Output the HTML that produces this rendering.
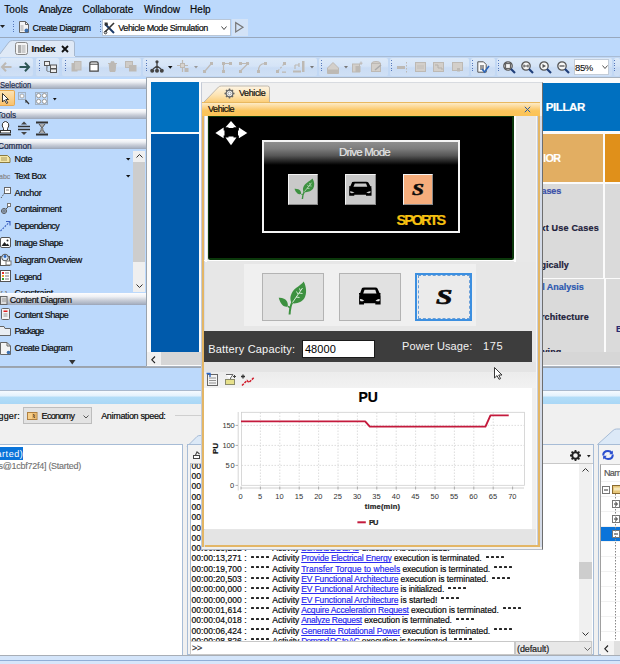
<!DOCTYPE html>
<html><head><meta charset="utf-8">
<style>
*{margin:0;padding:0;box-sizing:border-box}
html,body{width:620px;height:664px;overflow:hidden}
body{position:relative;background:#bcd9fc;font-family:"Liberation Sans",sans-serif;font-size:10px;color:#1a1a1a}
.a{position:absolute}
.t{position:absolute;white-space:pre;-webkit-text-stroke:0.2px currentColor}
svg{position:absolute;overflow:visible}
</style></head><body>

<div class="a" style="left:0px;top:0px;width:620px;height:18px;background:#bcd9fc;"></div>
<div class="t" style="left:4.20px;top:4.63px;font-size:10px;line-height:10px;color:#0a0a0a;letter-spacing:0.110px;">Tools</div>
<div class="t" style="left:38.70px;top:4.63px;font-size:10px;line-height:10px;color:#0a0a0a;letter-spacing:-0.346px;">Analyze</div>
<div class="t" style="left:82.50px;top:4.63px;font-size:10px;line-height:10px;color:#0a0a0a;letter-spacing:-0.036px;">Collaborate</div>
<div class="t" style="left:144.10px;top:4.63px;font-size:10px;line-height:10px;color:#0a0a0a;letter-spacing:0.084px;">Window</div>
<div class="t" style="left:190.10px;top:4.63px;font-size:10px;line-height:10px;color:#0a0a0a;">Help</div>
<div class="a" style="left:0px;top:18px;width:620px;height:19px;background:#bcd9fc;"></div>
<div class="a" style="left:0px;top:36.5px;width:620px;height:1px;background:#98a8bd;"></div>
<div class="a" style="left:0px;top:37.5px;width:620px;height:1px;background:#d5e6fb;"></div>
<svg style="left:0;top:25px" width="6" height="4"><path d="M0 0H5L2.5 3Z" fill="#222"/></svg>
<div class="a" style="left:12.5px;top:21.0px;width:1px;height:1px;background:#5577bb;"></div>
<div class="a" style="left:12.5px;top:23.5px;width:1px;height:1px;background:#5577bb;"></div>
<div class="a" style="left:12.5px;top:26.0px;width:1px;height:1px;background:#5577bb;"></div>
<div class="a" style="left:12.5px;top:28.5px;width:1px;height:1px;background:#5577bb;"></div>
<div class="a" style="left:12.5px;top:31.0px;width:1px;height:1px;background:#5577bb;"></div>
<svg style="left:18px;top:21px" width="12" height="13"><path d="M1.5 0.5H7.5L10.5 3.5V11.5H1.5Z" fill="#f4f4f4" stroke="#666"/><path d="M7.5 0.5V3.5H10.5" fill="none" stroke="#666"/><rect x="2.5" y="4" width="3" height="6" fill="#ccc"/><circle cx="8.5" cy="9.5" r="2" fill="#3b6fb0"/></svg>
<div class="t" style="left:32.60px;top:23.58px;font-size:9px;line-height:9px;color:#0a0a0a;letter-spacing:-0.401px;">Create Diagram</div>
<div class="a" style="left:99.5px;top:21.0px;width:1px;height:1px;background:#5577bb;"></div>
<div class="a" style="left:99.5px;top:23.5px;width:1px;height:1px;background:#5577bb;"></div>
<div class="a" style="left:99.5px;top:26.0px;width:1px;height:1px;background:#5577bb;"></div>
<div class="a" style="left:99.5px;top:28.5px;width:1px;height:1px;background:#5577bb;"></div>
<div class="a" style="left:99.5px;top:31.0px;width:1px;height:1px;background:#5577bb;"></div>
<div class="a" style="left:101.5px;top:19px;width:129px;height:17px;background:#ffffff;border:1px solid #b9c6d6;"></div>
<svg style="left:104px;top:21.5px" width="12" height="12"><path d="M1 2L10 11" stroke="#1a3a6a" stroke-width="2"/><path d="M10 1L1 10" stroke="#333" stroke-width="1.6"/><path d="M0.5 0.5L3.5 0.5L4 3L1 4Z" fill="#333"/><circle cx="1.5" cy="10.5" r="1.3" fill="none" stroke="#333"/></svg>
<div class="t" style="left:118.20px;top:23.98px;font-size:9px;line-height:9px;color:#0a0a0a;letter-spacing:-0.384px;">Vehicle Mode Simulation</div>
<svg style="left:221px;top:25.5px" width="7" height="5"><path d="M0.5 0.5L3 3.5L5.5 0.5" fill="none" stroke="#444" stroke-width="1"/></svg>
<div class="a" style="left:232px;top:19px;width:16px;height:17px;background:#d3e3f7;"></div>
<svg style="left:235px;top:22px" width="9" height="11"><path d="M0.7 0.7V10L8 5.35Z" fill="none" stroke="#777" stroke-width="1.2"/></svg>
<div class="a" style="left:0px;top:37.5px;width:620px;height:19.5px;background:#bcd9fc;"></div>
<div class="a" style="left:0px;top:56px;width:620px;height:1px;background:#a9bcd4;"></div>
<svg style="left:0;top:40px" width="80" height="18"><path d="M-2 16.5 L9 2 Q10.5 0.5 12.5 0.5 H72 Q74.5 0.5 74.5 3 V17 H-2Z" fill="#dfe9f6" stroke="#a6b8cf" stroke-width="1"/></svg>
<div class="a" style="left:0px;top:56px;width:75px;height:1.5px;background:#dfe9f6;"></div>
<svg style="left:15px;top:42px" width="14" height="13"><rect x="0.5" y="0.5" width="12" height="12" rx="2" fill="#f4f4f4" stroke="#888"/><rect x="3" y="3" width="3" height="8" fill="#aaa"/><rect x="6.5" y="3" width="4" height="8" fill="#ccc"/></svg>
<div class="t" style="left:31.60px;top:43.56px;font-size:9.5px;line-height:9.5px;font-weight:700;color:#111;letter-spacing:-0.213px;">Index</div>
<svg style="left:60.5px;top:44.5px" width="8" height="8"><path d="M1 1L7 7M7 1L1 7" stroke="#111" stroke-width="1.9"/></svg>
<div class="a" style="left:0px;top:57px;width:620px;height:20px;background:#c2d8f4;"></div>
<div class="a" style="left:0px;top:58px;width:33px;height:18px;background:linear-gradient(#dce9f8,#d5e4f7 45%,#cadcf4 55%,#d0e0f5);border-radius:2px;"></div>
<div class="a" style="left:35.5px;top:58px;width:23.5px;height:18px;background:linear-gradient(#dce9f8,#d5e4f7 45%,#cadcf4 55%,#d0e0f5);border-radius:2px;"></div>
<div class="a" style="left:62px;top:58px;width:79px;height:18px;background:linear-gradient(#dce9f8,#d5e4f7 45%,#cadcf4 55%,#d0e0f5);border-radius:2px;"></div>
<div class="a" style="left:143px;top:58px;width:173.5px;height:18px;background:linear-gradient(#dce9f8,#d5e4f7 45%,#cadcf4 55%,#d0e0f5);border-radius:2px;"></div>
<div class="a" style="left:318.5px;top:58px;width:69.5px;height:18px;background:linear-gradient(#dce9f8,#d5e4f7 45%,#cadcf4 55%,#d0e0f5);border-radius:2px;"></div>
<div class="a" style="left:390px;top:58px;width:79px;height:18px;background:linear-gradient(#dce9f8,#d5e4f7 45%,#cadcf4 55%,#d0e0f5);border-radius:2px;"></div>
<div class="a" style="left:471px;top:58px;width:24px;height:18px;background:linear-gradient(#dce9f8,#d5e4f7 45%,#cadcf4 55%,#d0e0f5);border-radius:2px;"></div>
<div class="a" style="left:497px;top:58px;width:115px;height:18px;background:linear-gradient(#dce9f8,#d5e4f7 45%,#cadcf4 55%,#d0e0f5);border-radius:2px;"></div>
<div class="a" style="left:613.5px;top:58px;width:6.5px;height:18px;background:linear-gradient(#dce9f8,#d5e4f7 45%,#cadcf4 55%,#d0e0f5);border-radius:2px;"></div>
<div class="a" style="left:0px;top:76.5px;width:620px;height:1px;background:#a8bad0;"></div>
<svg style="left:1px;top:62px" width="11" height="10" viewBox="0 0 11 10"><path d="M5 0.8L1 5L5 9.2M1.2 5H10.5" fill="none" stroke="#bdb9b4" stroke-width="2"/></svg>
<svg style="left:18.5px;top:62px" width="11" height="10" viewBox="0 0 11 10"><path d="M6 0.8L10 5L6 9.2M0.5 5H9.8" fill="none" stroke="#2d5656" stroke-width="2"/></svg>
<div class="a" style="left:38.7px;top:60.0px;width:1px;height:1px;background:#5577bb;"></div>
<div class="a" style="left:38.7px;top:62.5px;width:1px;height:1px;background:#5577bb;"></div>
<div class="a" style="left:38.7px;top:65.0px;width:1px;height:1px;background:#5577bb;"></div>
<div class="a" style="left:38.7px;top:67.5px;width:1px;height:1px;background:#5577bb;"></div>
<div class="a" style="left:38.7px;top:70.0px;width:1px;height:1px;background:#5577bb;"></div>
<svg style="left:44px;top:60.5px" width="13" height="12" viewBox="0 0 13 12"><rect x="0.5" y="0.5" width="5" height="4" fill="#eee" stroke="#555"/><rect x="6.5" y="4" width="6" height="3.5" fill="#eee" stroke="#555"/><rect x="6.5" y="8" width="6" height="3.5" fill="#eee" stroke="#555"/><path d="M3 4.5V10H6.5M3 6H6.5" fill="none" stroke="#555"/><rect x="3.5" y="5" width="2.5" height="5" fill="#c9dff5"/></svg>
<div class="a" style="left:65.2px;top:60.0px;width:1px;height:1px;background:#5577bb;"></div>
<div class="a" style="left:65.2px;top:62.5px;width:1px;height:1px;background:#5577bb;"></div>
<div class="a" style="left:65.2px;top:65.0px;width:1px;height:1px;background:#5577bb;"></div>
<div class="a" style="left:65.2px;top:67.5px;width:1px;height:1px;background:#5577bb;"></div>
<div class="a" style="left:65.2px;top:70.0px;width:1px;height:1px;background:#5577bb;"></div>
<svg style="left:71px;top:61px" width="11" height="11" viewBox="0 0 11 11"><rect x="0.5" y="2" width="6" height="8.5" fill="#bdb9b4"/><rect x="3.5" y="0.5" width="6.5" height="8.5" fill="#cbc8c4" stroke="#bdb9b4"/></svg>
<svg style="left:89px;top:61px" width="10" height="11" viewBox="0 0 10 11"><path d="M0.8 2.5Q0.8 0.8 2.5 0.8H7.5Q9.2 0.8 9.2 2.5V10.2H0.8Z" fill="#fff" stroke="#444" stroke-width="1.2"/><path d="M1 3.2H9" stroke="#444"/></svg>
<svg style="left:108px;top:61px" width="9" height="11" viewBox="0 0 9 11"><path d="M0 2.5H9M3 2.5V0.8H6V2.5M1.2 3.5H7.8L7 10.5H2Z" fill="#bdb9b4" stroke="#bdb9b4"/></svg>
<svg style="left:124.5px;top:61px" width="12" height="11" viewBox="0 0 12 11"><rect x="0.5" y="0.5" width="7" height="6" fill="#cfccc8" stroke="#bdb9b4"/><rect x="4" y="4" width="7.5" height="6.5" fill="#bdb9b4"/></svg>
<div class="a" style="left:145.5px;top:60.0px;width:1px;height:1px;background:#5577bb;"></div>
<div class="a" style="left:145.5px;top:62.5px;width:1px;height:1px;background:#5577bb;"></div>
<div class="a" style="left:145.5px;top:65.0px;width:1px;height:1px;background:#5577bb;"></div>
<div class="a" style="left:145.5px;top:67.5px;width:1px;height:1px;background:#5577bb;"></div>
<div class="a" style="left:145.5px;top:70.0px;width:1px;height:1px;background:#5577bb;"></div>
<svg style="left:150px;top:59.5px" width="14" height="13" viewBox="0 0 14 13"><circle cx="7" cy="1.8" r="1.6" fill="#444"/><path d="M7 3V6M7 6L3 9M7 6L11 9M7 6V9" stroke="#444" stroke-width="1.3" fill="none"/><circle cx="2.2" cy="10.8" r="2" fill="#444"/><circle cx="7" cy="10.8" r="2" fill="#444"/><circle cx="11.8" cy="10.8" r="2" fill="#444"/></svg>
<svg style="left:168px;top:65.5px" width="5" height="3" viewBox="0 0 5 3"><path d="M0 0H4.5L2.25 2.8Z" fill="#111"/></svg>
<svg style="left:176.5px;top:60px" width="12" height="13" viewBox="0 0 12 13"><path d="M5.5 0V12M0 5.5H11" stroke="#bdb9b4" stroke-width="1.2"/><rect x="3.5" y="3.5" width="4" height="4" fill="#d8d4cf" stroke="#bdb9b4"/><rect x="7.5" y="8" width="4" height="4" fill="#bdb9b4"/></svg>
<svg style="left:193.5px;top:66px" width="4" height="3" viewBox="0 0 4 3"><path d="M0 0H4L2 2.5Z" fill="#999"/></svg>
<svg style="left:203px;top:61.5px" width="11" height="11" viewBox="0 0 11 11"><path d="M2 9L8 2" stroke="#bdb9b4" stroke-width="1.2"/><rect x="0" y="8" width="3" height="3" fill="#bdb9b4"/><rect x="7" y="0" width="3" height="3" fill="#bdb9b4"/></svg>
<svg style="left:221.5px;top:61.5px" width="11" height="11" viewBox="0 0 11 11"><path d="M1.5 1.5H9M1.5 1.5V9" stroke="#bdb9b4" stroke-width="1.2"/><rect x="0" y="0" width="3" height="3" fill="#bdb9b4"/><rect x="7" y="0" width="3" height="3" fill="#bdb9b4"/><rect x="0" y="8" width="3" height="3" fill="#bdb9b4"/></svg>
<svg style="left:239px;top:61.5px" width="11" height="11" viewBox="0 0 11 11"><path d="M1.5 1.5H9L1.5 9" stroke="#bdb9b4" stroke-width="1.2" fill="none"/><rect x="0" y="0" width="3" height="3" fill="#bdb9b4"/><rect x="7" y="0" width="3" height="3" fill="#bdb9b4"/><rect x="0" y="8" width="3" height="3" fill="#bdb9b4"/></svg>
<svg style="left:257px;top:61.5px" width="11" height="11" viewBox="0 0 11 11"><path d="M1.5 9Q1.5 1.5 8 1.5" stroke="#bdb9b4" stroke-width="1.2" fill="none"/><rect x="0" y="8" width="3" height="3" fill="#bdb9b4"/><rect x="7" y="0" width="3" height="3" fill="#bdb9b4"/></svg>
<svg style="left:275.5px;top:61.5px" width="11" height="11" viewBox="0 0 11 11"><path d="M2 9L8 2" stroke="#bdb9b4" stroke-width="1.2" stroke-dasharray="2 1.5"/><rect x="0" y="8" width="3" height="3" fill="#bdb9b4"/><rect x="7" y="0" width="3" height="3" fill="#bdb9b4"/><rect x="6" y="9.5" width="4" height="1.3" fill="#bdb9b4"/></svg>
<svg style="left:293px;top:61px" width="12" height="12" viewBox="0 0 12 12"><path d="M2 4H6M2 4V8M6 2V6" stroke="#bdb9b4" stroke-width="1.2" fill="none"/><rect x="9" y="0" width="2.5" height="11" fill="#bdb9b4"/><rect x="0" y="9.5" width="8" height="2" fill="#bdb9b4"/></svg>
<svg style="left:309.5px;top:66px" width="4" height="3" viewBox="0 0 4 3"><path d="M0 0H4L2 2.5Z" fill="#777"/></svg>
<div class="a" style="left:321.3px;top:60.0px;width:1px;height:1px;background:#5577bb;"></div>
<div class="a" style="left:321.3px;top:62.5px;width:1px;height:1px;background:#5577bb;"></div>
<div class="a" style="left:321.3px;top:65.0px;width:1px;height:1px;background:#5577bb;"></div>
<div class="a" style="left:321.3px;top:67.5px;width:1px;height:1px;background:#5577bb;"></div>
<div class="a" style="left:321.3px;top:70.0px;width:1px;height:1px;background:#5577bb;"></div>
<svg style="left:327px;top:61.5px" width="12" height="12" viewBox="0 0 12 12"><path d="M0.5 6L6 0.5L11.5 6V11.5H0.5Z" fill="#d3cfca" stroke="#bdb9b4"/><rect x="1" y="7.5" width="10" height="4" fill="#bdb9b4"/></svg>
<svg style="left:344px;top:66px" width="4" height="3" viewBox="0 0 4 3"><path d="M0 0H4L2 2.5Z" fill="#777"/></svg>
<svg style="left:351.5px;top:61px" width="12" height="12" viewBox="0 0 12 12"><rect x="0.5" y="3" width="7" height="8" fill="#d3cfca" stroke="#bdb9b4"/><rect x="3.5" y="5" width="5" height="6" fill="#bdb9b4"/><path d="M9 0.5V4M7.5 2.2H10.5" stroke="#bdb9b4"/></svg>
<svg style="left:371px;top:61px" width="11" height="12" viewBox="0 0 11 12"><ellipse cx="5" cy="2.5" rx="4.5" ry="2" fill="#d3cfca" stroke="#bdb9b4"/><rect x="0.5" y="2.5" width="9" height="8" fill="#d3cfca" stroke="#bdb9b4"/><path d="M4 9L10 4" stroke="#aaa" stroke-width="1.5"/></svg>
<div class="a" style="left:391.3px;top:60.0px;width:1px;height:1px;background:#5577bb;"></div>
<div class="a" style="left:391.3px;top:62.5px;width:1px;height:1px;background:#5577bb;"></div>
<div class="a" style="left:391.3px;top:65.0px;width:1px;height:1px;background:#5577bb;"></div>
<div class="a" style="left:391.3px;top:67.5px;width:1px;height:1px;background:#5577bb;"></div>
<div class="a" style="left:391.3px;top:70.0px;width:1px;height:1px;background:#5577bb;"></div>
<svg style="left:397px;top:61.5px" width="11" height="11" viewBox="0 0 11 11"><rect x="0" y="4" width="8" height="3" fill="#bdb9b4"/><path d="M9.5 0V11" stroke="#bdb9b4" stroke-dasharray="1.5 1.5"/></svg>
<svg style="left:415px;top:61.5px" width="11" height="10" viewBox="0 0 11 10"><rect x="0.5" y="0.5" width="10" height="9" fill="#d3cfca" stroke="#bdb9b4"/><path d="M2 4H9M2 6H9" stroke="#c2beb9"/></svg>
<svg style="left:433px;top:61.5px" width="11" height="10" viewBox="0 0 11 10"><rect x="0.5" y="0.5" width="10" height="9" fill="#d3cfca" stroke="#bdb9b4"/><path d="M2 3H5V6H9V8" stroke="#b5b1ac" fill="none"/></svg>
<svg style="left:451.5px;top:61.5px" width="11" height="10" viewBox="0 0 11 10"><rect x="0.5" y="0.5" width="10" height="8" fill="#d3cfca" stroke="#bdb9b4"/><rect x="5" y="6" width="3" height="3.5" fill="#bdb9b4"/></svg>
<div class="a" style="left:472.3px;top:60.0px;width:1px;height:1px;background:#5577bb;"></div>
<div class="a" style="left:472.3px;top:62.5px;width:1px;height:1px;background:#5577bb;"></div>
<div class="a" style="left:472.3px;top:65.0px;width:1px;height:1px;background:#5577bb;"></div>
<div class="a" style="left:472.3px;top:67.5px;width:1px;height:1px;background:#5577bb;"></div>
<div class="a" style="left:472.3px;top:70.0px;width:1px;height:1px;background:#5577bb;"></div>
<svg style="left:476.5px;top:60.5px" width="13" height="13" viewBox="0 0 13 13"><path d="M0.8 0.8H6.5L9.2 3.5V11.2H0.8Z" fill="#fafafa" stroke="#555"/><path d="M3 4H7L7 9H3Z" fill="#999"/><path d="M5 8L7.5 11L12 5" fill="none" stroke="#2b64b8" stroke-width="1.6"/></svg>
<div class="a" style="left:498px;top:60.0px;width:1px;height:1px;background:#5577bb;"></div>
<div class="a" style="left:498px;top:62.5px;width:1px;height:1px;background:#5577bb;"></div>
<div class="a" style="left:498px;top:65.0px;width:1px;height:1px;background:#5577bb;"></div>
<div class="a" style="left:498px;top:67.5px;width:1px;height:1px;background:#5577bb;"></div>
<div class="a" style="left:498px;top:70.0px;width:1px;height:1px;background:#5577bb;"></div>
<svg style="left:503px;top:60.5px" width="13" height="13" viewBox="0 0 13 13"><circle cx="5" cy="5" r="4.2" fill="#f6f6f6" stroke="#555" stroke-width="1.3"/><rect x="2.6" y="2.6" width="4.8" height="4.8" fill="none" stroke="#555"/><path d="M8 8L12 12" stroke="#1f3e7a" stroke-width="2.2"/></svg>
<svg style="left:521px;top:60.5px" width="13" height="13" viewBox="0 0 13 13"><circle cx="5" cy="5" r="4.2" fill="#f6f6f6" stroke="#555" stroke-width="1.3"/><path d="M2.5 5H7.5M3 3.5V6.5M7 3.5V6.5" stroke="#555"/><path d="M8 8L12 12" stroke="#1f3e7a" stroke-width="2.2"/></svg>
<svg style="left:539px;top:60.5px" width="13" height="13" viewBox="0 0 13 13"><circle cx="5" cy="5" r="4.2" fill="#f6f6f6" stroke="#555" stroke-width="1.3"/><path d="M3.5 3L7 5L3.5 7Z" fill="#555"/><path d="M8 8L12 12" stroke="#1f3e7a" stroke-width="2.2"/></svg>
<svg style="left:557px;top:60.5px" width="13" height="13" viewBox="0 0 13 13"><circle cx="5" cy="5" r="4.2" fill="#f6f6f6" stroke="#555" stroke-width="1.3"/><path d="M2.5 5H7.5" stroke="#555" stroke-width="1.3"/><path d="M8 8L12 12" stroke="#1f3e7a" stroke-width="2.2"/></svg>
<div class="a" style="left:573.5px;top:58.5px;width:35px;height:16px;background:#ffffff;border:1px solid #c2ccd8;"></div>
<div class="t" style="left:575.00px;top:63.06px;font-size:9.5px;line-height:9.5px;color:#111;letter-spacing:-0.378px;-webkit-text-stroke:0.1px;">85%</div>
<svg style="left:601.5px;top:64.5px" width="7" height="5" viewBox="0 0 7 5"><path d="M0.5 0.5L3 3.5L5.5 0.5" fill="none" stroke="#555"/></svg>
<div class="a" style="left:614px;top:60.0px;width:1px;height:1px;background:#5577bb;"></div>
<div class="a" style="left:614px;top:62.5px;width:1px;height:1px;background:#5577bb;"></div>
<div class="a" style="left:614px;top:65.0px;width:1px;height:1px;background:#5577bb;"></div>
<div class="a" style="left:614px;top:67.5px;width:1px;height:1px;background:#5577bb;"></div>
<div class="a" style="left:614px;top:70.0px;width:1px;height:1px;background:#5577bb;"></div>
<div class="a" style="left:0px;top:77px;width:146px;height:291px;background:#bcd9fc;"></div>
<div class="a" style="left:145.5px;top:77px;width:1px;height:290px;background:#9aa3ad;"></div>
<div class="a" style="left:0px;top:78.5px;width:145.5px;height:10.299999999999997px;background:linear-gradient(#fdfdfe 0%,#eef0f4 30%,#c9ced8 60%,#a9b2c2 90%,#9aa4b6 100%);"></div>
<div class="t" style="left:-0.50px;top:80.06px;font-size:9.5px;line-height:9.5px;color:#1a2a50;transform:scaleX(0.7956);transform-origin:0 0;">Selection</div>
<div class="a" style="left:0px;top:90px;width:14.5px;height:16px;background:linear-gradient(#fde3b3,#f9c26e);border:1px solid #e8a94f;border-left:none;border-radius:0 2px 2px 0;"></div>
<svg style="left:2px;top:92.5px" width="7" height="11" viewBox="0 0 7 11"><path d="M0.5 0.5V9L2.5 7L4.5 10.5L5.8 9.8L3.8 6.5H6.5Z" fill="#fff" stroke="#222" stroke-width="0.9"/></svg>
<svg style="left:17.5px;top:92px" width="12" height="13" viewBox="0 0 12 13"><rect x="0.5" y="0.5" width="7" height="7" fill="none" stroke="#888" stroke-dasharray="1 1"/><circle cx="4" cy="4" r="2" fill="#fff" stroke="#aaa"/><path d="M7.5 8L11 12" stroke="#333" stroke-width="1.2"/><path d="M7.5 8V11L9 10Z" fill="#333"/></svg>
<svg style="left:35px;top:92px" width="13" height="13" viewBox="0 0 13 13"><rect x="0.5" y="0.5" width="12" height="12" fill="none" stroke="#888" stroke-dasharray="1 1"/><circle cx="3.6" cy="3.6" r="2.1" fill="#fff" stroke="#999"/><circle cx="9.4" cy="3.6" r="2.1" fill="#fff" stroke="#999"/><circle cx="3.6" cy="9.4" r="2.1" fill="#fff" stroke="#999"/><circle cx="9.4" cy="9.4" r="2.1" fill="#fff" stroke="#999"/></svg>
<svg style="left:52.8px;top:97.5px" width="4" height="3" viewBox="0 0 4 3"><path d="M0 0H3.6L1.8 2.4Z" fill="#111"/></svg>
<div class="a" style="left:0px;top:108.9px;width:145.5px;height:10.299999999999997px;background:linear-gradient(#fdfdfe 0%,#eef0f4 30%,#c9ced8 60%,#a9b2c2 90%,#9aa4b6 100%);"></div>
<div class="t" style="left:-3.20px;top:110.46px;font-size:9.5px;line-height:9.5px;color:#1a2a50;transform:scaleX(0.8634);transform-origin:0 0;">Tools</div>
<svg style="left:0px;top:121px" width="11" height="15" viewBox="0 0 11 15"><path d="M3.5 7.5Q1.5 5 2.5 2.5Q4 0.5 5.5 0.5Q7 0.5 8.5 2.5Q9.5 5 7.5 7.5V9.5H3.5Z" fill="#fff" stroke="#333"/><rect x="0.5" y="9.5" width="10" height="2.5" fill="#fff" stroke="#333"/><rect x="0" y="13" width="11" height="1.5" fill="#333"/></svg>
<svg style="left:17.5px;top:121px" width="12" height="15" viewBox="0 0 12 15"><path d="M6 0.5L9 3.5H3Z" fill="#444"/><path d="M0 5.5H12M0 8.5H12" stroke="#333" stroke-width="1.3"/><path d="M6 14L9 11H3Z" fill="#444"/></svg>
<svg style="left:35.5px;top:121px" width="12" height="15" viewBox="0 0 12 15"><rect x="0" y="0.5" width="12" height="2" fill="#333"/><path d="M3 3L6 7L9 3M3 12L6 8L9 12" fill="#aaa" stroke="#555"/><circle cx="6" cy="8" r="1.6" fill="#888"/><rect x="0" y="12.5" width="12" height="2" fill="#333"/></svg>
<div class="a" style="left:0px;top:139.2px;width:145.5px;height:10.300000000000011px;background:linear-gradient(#fdfdfe 0%,#eef0f4 30%,#c9ced8 60%,#a9b2c2 90%,#9aa4b6 100%);"></div>
<div class="t" style="left:-1.60px;top:140.76px;font-size:9.5px;line-height:9.5px;color:#1a2a50;transform:scaleX(0.8733);transform-origin:0 0;">Common</div>
<div class="a" style="left:0;top:150px;width:133px;height:143px;overflow:hidden">
<div class="t" style="left:14.50px;top:5.18px;font-size:9px;line-height:9px;color:#0a0a0a;letter-spacing:-0.365px;">Note</div>
<svg style="left:-1px;top:5px" width="12" height="8" viewBox="0 0 12 8"><path d="M0.5 0.5H8.5L11 3V7.5H0.5Z" fill="#f5e7a8" stroke="#8a7a40"/><path d="M2 3H8M2 5H8" stroke="#8a7a40" stroke-width="0.7"/></svg>
<div class="t" style="left:14.50px;top:22.18px;font-size:9px;line-height:9px;color:#0a0a0a;letter-spacing:-0.399px;">Text Box</div>
<div class="t" style="left:-1.00px;top:23.37px;font-size:7px;line-height:7px;color:#888;">abc</div>
<div class="t" style="left:14.50px;top:38.78px;font-size:9px;line-height:9px;color:#0a0a0a;letter-spacing:-0.262px;">Anchor</div>
<svg style="left:0px;top:36.599999999999994px" width="11" height="12" viewBox="0 0 11 12"><rect x="4.5" y="0.5" width="6" height="6" fill="#fff" stroke="#666"/><path d="M1 11L4.5 6" stroke="#555" stroke-dasharray="1.2 1"/><path d="M6 3H9" stroke="#666" stroke-width="0.8"/></svg>
<div class="t" style="left:14.50px;top:55.48px;font-size:9px;line-height:9px;color:#0a0a0a;letter-spacing:-0.381px;">Containment</div>
<svg style="left:0px;top:53.30000000000001px" width="11" height="12" viewBox="0 0 11 12"><circle cx="4" cy="8" r="2.5" fill="none" stroke="#555"/><path d="M1.5 8H6.5M4 5.5V10.5" stroke="#555" stroke-width="0.8"/><path d="M6 6L8.5 3.5" stroke="#555"/><rect x="7.5" y="0.5" width="3" height="3" fill="#fff" stroke="#777"/></svg>
<div class="t" style="left:14.50px;top:72.18px;font-size:9px;line-height:9px;color:#0a0a0a;letter-spacing:-0.592px;">Dependency</div>
<svg style="left:0px;top:70px" width="11" height="12" viewBox="0 0 11 12"><path d="M0.5 11L9.5 2" stroke="#3a5fbf" stroke-width="1.1" stroke-dasharray="1.8 1.2"/><path d="M6 1.5H10V5.5" fill="none" stroke="#3a5fbf" stroke-width="1.1"/></svg>
<div class="t" style="left:14.50px;top:89.18px;font-size:9px;line-height:9px;color:#0a0a0a;letter-spacing:-0.483px;">Image Shape</div>
<svg style="left:0px;top:87px" width="11" height="11" viewBox="0 0 11 11"><rect x="0.5" y="0.5" width="10" height="10" rx="1.5" fill="#fff" stroke="#555"/><path d="M1.5 9L4.5 5L6.5 7.5L7.5 6.5L9.5 9Z" fill="#222"/><circle cx="7.5" cy="3.5" r="1" fill="#222"/></svg>
<div class="t" style="left:14.50px;top:105.88px;font-size:9px;line-height:9px;color:#0a0a0a;letter-spacing:-0.421px;">Diagram Overview</div>
<svg style="left:0px;top:102.69999999999999px" width="12" height="13" viewBox="0 0 12 13"><rect x="0.5" y="3.5" width="9" height="9" fill="#fff" stroke="#555"/><circle cx="5" cy="4.5" r="3.3" fill="#d8e8f8" stroke="#555"/><circle cx="5" cy="3.5" r="1.4" fill="#2a66c0"/><rect x="6" y="8" width="5" height="4" fill="#fff" stroke="#777"/></svg>
<div class="t" style="left:14.50px;top:122.58px;font-size:9px;line-height:9px;color:#0a0a0a;letter-spacing:-0.565px;">Legend</div>
<svg style="left:0px;top:120.39999999999998px" width="11" height="12" viewBox="0 0 11 12"><rect x="0.5" y="0.5" width="10" height="11" fill="#fff" stroke="#555"/><rect x="2" y="2" width="2" height="2" fill="#e03030"/><rect x="2" y="5" width="2" height="2" fill="#f0a020"/><rect x="2" y="8" width="2" height="2" fill="#30a030"/><path d="M5 3H9M5 6H9M5 9H9" stroke="#777"/></svg>
<div class="t" style="left:14.50px;top:139.18px;font-size:9px;line-height:9px;color:#0a0a0a;letter-spacing:-0.257px;">Constraint</div>
<div class="t" style="left:0.00px;top:139.73px;font-size:8px;line-height:8px;color:#777;">{ }</div>
</div>
<div class="a" style="left:133.4px;top:150.8px;width:11.3px;height:141.2px;background:#efefef;"></div>
<div class="a" style="left:133.4px;top:162.2px;width:11.3px;height:99.5px;background:#cdcdcd;"></div>
<svg style="left:135.5px;top:154px" width="7" height="4" viewBox="0 0 7 4"><path d="M0.5 3.5L3.5 0.5L6.5 3.5" fill="none" stroke="#333"/></svg>
<svg style="left:135.5px;top:284px" width="7" height="4" viewBox="0 0 7 4"><path d="M0.5 0.5L3.5 3.5L6.5 0.5" fill="none" stroke="#333"/></svg>
<svg style="left:126px;top:157.8px" width="5" height="3" viewBox="0 0 5 3"><path d="M0 0H4.4L2.2 2.6Z" fill="#111"/></svg>
<svg style="left:126px;top:174.8px" width="5" height="3" viewBox="0 0 5 3"><path d="M0 0H4.4L2.2 2.6Z" fill="#111"/></svg>
<div class="a" style="left:0px;top:293.3px;width:145.5px;height:12px;background:linear-gradient(#fdfdfe 0%,#eef0f4 30%,#c9ced8 60%,#a9b2c2 90%,#9aa4b6 100%);"></div>
<svg style="left:-0.5px;top:296px" width="8" height="9" viewBox="0 0 8 9"><rect x="0.5" y="0.5" width="6.5" height="8" fill="#ddd" stroke="#666"/><path d="M2 3H6M2 5H6" stroke="#888" stroke-width="0.8"/></svg>
<div class="t" style="left:9.70px;top:296.18px;font-size:9px;line-height:9px;color:#111;letter-spacing:-0.402px;">Content Diagram</div>
<div class="t" style="left:14.50px;top:310.58px;font-size:9px;line-height:9px;color:#0a0a0a;letter-spacing:-0.486px;">Content Shape</div>
<svg style="left:1px;top:308.4px" width="9" height="12" viewBox="0 0 9 12"><rect x="0.5" y="0.5" width="8" height="11" rx="1" fill="#f5f5f5" stroke="#666"/><rect x="2.5" y="2.5" width="4" height="1.5" fill="#e02020"/><path d="M2.5 6H6.5M2.5 8H6.5" stroke="#999"/></svg>
<div class="t" style="left:14.50px;top:327.48px;font-size:9px;line-height:9px;color:#0a0a0a;letter-spacing:-0.885px;">Package</div>
<svg style="left:-1px;top:326.3px" width="12" height="10" viewBox="0 0 12 10"><path d="M0.5 2.5V0.5H5L6 2.5H11.5V9.5H0.5Z" fill="#eaeef3" stroke="#666"/></svg>
<div class="t" style="left:14.50px;top:344.18px;font-size:9px;line-height:9px;color:#0a0a0a;letter-spacing:-0.409px;">Create Diagram</div>
<svg style="left:-0.5px;top:342px" width="12" height="13" viewBox="0 0 12 13"><path d="M0.5 0.5H7L10.5 4V12.5H0.5Z" fill="#f4f4f4" stroke="#666"/><path d="M7 0.5V4H10.5" fill="none" stroke="#666"/><circle cx="8.5" cy="10.5" r="1.8" fill="#3b6fb0"/></svg>
<svg style="left:68.5px;top:359.8px" width="7" height="5" viewBox="0 0 7 5"><path d="M0 0H6.5L3.25 4.4Z" fill="#333"/></svg>
<div class="a" style="left:0px;top:366px;width:146px;height:1px;background:#9aa3ad;"></div>
<div class="a" style="left:146.5px;top:77px;width:473.5px;height:289px;background:#fbfbfb;"></div>
<div class="a" style="left:146px;top:76.6px;width:474px;height:0.8px;background:#a9b3bf;"></div>
<div class="a" style="left:150.5px;top:81.6px;width:48.8px;height:50.7px;background:#0070c0;"></div>
<div class="a" style="left:150.5px;top:134px;width:48.8px;height:218.3px;background:#005aab;"></div>
<div class="a" style="left:543px;top:83px;width:77px;height:47.8px;background:#0070c0;"></div>
<div class="t" style="left:545.70px;top:102.27px;font-size:11.5px;line-height:11.5px;font-weight:700;color:#ffffff;letter-spacing:-0.382px;">PILLAR</div>
<div class="a" style="left:543px;top:133.8px;width:60px;height:48px;background:#e2ae62;"></div>
<div class="a" style="left:604.5px;top:133.8px;width:15.5px;height:48px;background:#e0901a;"></div>
<div class="t" style="left:543.00px;top:153.39px;font-size:11px;line-height:11px;font-weight:700;color:#ffffff;letter-spacing:-0.641px;clip-path:inset(0 0 0 0.5px);">IOR</div>
<div class="a" style="left:543px;top:183.7px;width:60.3px;height:94px;background:#dadada;"></div>
<div class="a" style="left:604.5px;top:183.7px;width:15.5px;height:94px;background:#dadada;"></div>
<div class="a" style="left:543px;top:279px;width:60.8px;height:73.3px;background:#dadada;"></div>
<div class="a" style="left:605.5px;top:279px;width:14.5px;height:73.3px;background:#dadada;"></div>
<div class="a" style="left:543px;top:183px;width:60px;height:169px;overflow:hidden">
<div class="t" style="left:-1.50px;top:4.38px;font-size:9px;line-height:9px;font-weight:700;color:#3a4fa8;letter-spacing:-0.104px;">ases</div>
<div class="t" style="left:-2.50px;top:40.58px;font-size:9px;line-height:9px;font-weight:700;color:#1c1c3a;letter-spacing:0.198px;">xt Use Cases</div>
<div class="t" style="left:-2.50px;top:77.58px;font-size:9px;line-height:9px;font-weight:700;color:#1c1c3a;letter-spacing:0.034px;">gically</div>
<div class="t" style="left:-0.80px;top:99.68px;font-size:9px;line-height:9px;font-weight:700;color:#2c58b0;letter-spacing:-0.019px;">l Analysis</div>
<div class="t" style="left:-2.00px;top:129.78px;font-size:9px;line-height:9px;font-weight:700;color:#1c1c3a;letter-spacing:0.119px;">rchitecture</div>
<div class="t" style="left:-0.50px;top:164.88px;font-size:9px;line-height:9px;font-weight:700;color:#1c1c3a;letter-spacing:0.068px;">ving</div>
</div>
<div class="t" style="left:616.00px;top:324.88px;font-size:9px;line-height:9px;font-weight:700;color:#2a2a70;">B</div>
<div class="a" style="left:146.5px;top:352.3px;width:473.5px;height:13.2px;background:#d6d6d6;"></div>
<div class="a" style="left:146.5px;top:352.3px;width:14px;height:13.2px;background:#f0f0f0;"></div>
<svg style="left:151px;top:355.5px" width="5" height="8" viewBox="0 0 5 8"><path d="M4 0.5L0.8 3.8L4 7" fill="none" stroke="#222" stroke-width="1.1"/></svg>
<div class="a" style="left:146px;top:365.5px;width:474px;height:1px;background:#a9b3bf;"></div>
<div class="a" style="left:0px;top:367px;width:620px;height:1.2px;background:#9ea6b0;"></div>
<div class="a" style="left:0px;top:368.2px;width:620px;height:21.5px;background:#bcd9fb;"></div>
<div class="a" style="left:0px;top:389.6px;width:620px;height:1px;background:#a9b9cd;"></div>
<div class="a" style="left:0px;top:390.6px;width:620px;height:13.4px;background:linear-gradient(#f5faff 0%,#e2f1fc 40%,#b3ddf8 45%,#a9d7f6 100%);"></div>
<div class="a" style="left:0px;top:404px;width:620px;height:252px;background:#f0f0f0;"></div>
<div class="t" style="left:-1.50px;top:412.28px;font-size:9px;line-height:9px;color:#0a0a0a;letter-spacing:0.176px;">gger:</div>
<div class="a" style="left:23.4px;top:407.3px;width:68.5px;height:17px;background:#e3e3e3;border:1px solid #bdbdbd;"></div>
<svg style="left:27.4px;top:411.5px" width="11" height="8" viewBox="0 0 11 8"><rect x="0.5" y="0.5" width="9.5" height="7" fill="#f7cf8a" stroke="#b08040"/><rect x="5" y="1.5" width="4" height="5" fill="#e8b060"/><path d="M6 2.5Q8 2.5 7 4Q6 5.5 8 5.5" stroke="#333" fill="none" stroke-width="0.8"/></svg>
<div class="t" style="left:41.60px;top:412.28px;font-size:9px;line-height:9px;color:#0a0a0a;letter-spacing:-0.702px;">Economy</div>
<svg style="left:83px;top:414.5px" width="6" height="4" viewBox="0 0 6 4"><path d="M0.5 0.5L3 3L5.5 0.5" fill="none" stroke="#555"/></svg>
<div class="t" style="left:101.20px;top:412.08px;font-size:9px;line-height:9px;color:#0a0a0a;letter-spacing:-0.328px;">Animation speed:</div>
<div class="a" style="left:174.8px;top:414.8px;width:30px;height:1.6px;background:#cfcfcf;"></div>
<div class="a" style="left:0px;top:444.3px;width:183px;height:210.5px;background:#ffffff;border:1px solid #a7bcd6;border-left:none;border-bottom:none;"></div>
<div class="a" style="left:0px;top:447px;width:23.4px;height:12.7px;background:#0a74da;"></div>
<div class="t" style="left:-3.50px;top:449.68px;font-size:9px;line-height:9px;color:#ffffff;letter-spacing:0.541px;-webkit-text-stroke:0;">arted)</div>
<div class="t" style="left:-1.50px;top:461.88px;font-size:9px;line-height:9px;color:#707070;letter-spacing:-0.273px;-webkit-text-stroke:0.1px;">s@1cbf72f4] (Started)</div>
<svg style="left:186px;top:435px" width="110" height="12"><path d="M1 11.5L11 1.5Q12 0.5 14 0.5H100Q102 0.5 102 2.5V11.5" fill="#dce9f7" stroke="#a7bcd6"/></svg>
<div class="a" style="left:187px;top:444.3px;width:406.5px;height:211px;background:#f3f3f3;border:1px solid #a7bcd6;"></div>
<svg style="left:192.5px;top:450.5px" width="7" height="8" viewBox="0 0 7 8"><path d="M1 7.5L4 0.8L6.5 3" fill="none" stroke="#444" stroke-width="1.1"/><rect x="0.5" y="4.5" width="6" height="3" fill="#fff" stroke="#444"/></svg>
<svg style="left:569.5px;top:449.5px" width="11" height="11" viewBox="0 0 11 11"><circle cx="5.5" cy="5.5" r="3.3" fill="none" stroke="#222" stroke-width="2"/><path d="M5.5 0V2.2M5.5 8.8V11M0 5.5H2.2M8.8 5.5H11M1.6 1.6L3.1 3.1M7.9 7.9L9.4 9.4M9.4 1.6L7.9 3.1M3.1 7.9L1.6 9.4" stroke="#222" stroke-width="1.8"/></svg>
<svg style="left:586.5px;top:454.5px" width="4" height="3" viewBox="0 0 4 3"><path d="M0 0H3.6L1.8 2.4Z" fill="#222"/></svg>
<div class="a" style="left:189.5px;top:462.6px;width:403px;height:178.4px;background:#ffffff;border-left:1px solid #a7bcd6;border-top:1px solid #c8c8c8;"></div>
<div class="a" style="left:190.5px;top:463.6px;width:389px;height:177px;overflow:hidden">
<div class="t" style="left:1.00px;top:-1.80px;font-size:8.5px;line-height:8.5px;color:#0a0a0a;letter-spacing:0.063px;">00:00:00,000 :</div>
<div class="a" style="left:60.0px;top:-1px;width:3.0px;height:2.5px;background:#262626;border-radius:0.5px;"></div>
<div class="a" style="left:65.0px;top:-1px;width:3.0px;height:2.5px;background:#262626;border-radius:0.5px;"></div>
<div class="a" style="left:70.0px;top:-1px;width:3.0px;height:2.5px;background:#262626;border-radius:0.5px;"></div>
<div class="a" style="left:75.0px;top:-1px;width:3.0px;height:2.5px;background:#262626;border-radius:0.5px;"></div>
<div class="t" style="left:81.70px;top:-1.80px;font-size:8.5px;line-height:8.5px;color:#0a0a0a;letter-spacing:0.037px;">Activity</div>
<div class="t" style="left:110.70px;top:-1.80px;font-size:8.5px;line-height:8.5px;color:#2b2bf0;letter-spacing:-0.821px;text-decoration:underline;text-decoration-thickness:1px;text-underline-offset:1px;text-decoration-skip-ink:none;">Demand DC to AC</div>
<div class="t" style="left:171.25px;top:-1.80px;font-size:8.5px;line-height:8.5px;color:#0a0a0a;letter-spacing:-0.153px;">is initialized.</div>
<div class="a" style="left:218.9px;top:-1px;width:3.0px;height:2.5px;background:#262626;border-radius:0.5px;"></div>
<div class="a" style="left:223.9px;top:-1px;width:3.0px;height:2.5px;background:#262626;border-radius:0.5px;"></div>
<div class="a" style="left:228.9px;top:-1px;width:3.0px;height:2.5px;background:#262626;border-radius:0.5px;"></div>
<div class="a" style="left:233.9px;top:-1px;width:3.0px;height:2.5px;background:#262626;border-radius:0.5px;"></div>
<div class="t" style="left:1.00px;top:8.50px;font-size:8.5px;line-height:8.5px;color:#0a0a0a;letter-spacing:0.063px;">00:00:00,000 :</div>
<div class="a" style="left:60.0px;top:10px;width:3.0px;height:2.5px;background:#262626;border-radius:0.5px;"></div>
<div class="a" style="left:65.0px;top:10px;width:3.0px;height:2.5px;background:#262626;border-radius:0.5px;"></div>
<div class="a" style="left:70.0px;top:10px;width:3.0px;height:2.5px;background:#262626;border-radius:0.5px;"></div>
<div class="a" style="left:75.0px;top:10px;width:3.0px;height:2.5px;background:#262626;border-radius:0.5px;"></div>
<div class="t" style="left:81.70px;top:8.50px;font-size:8.5px;line-height:8.5px;color:#0a0a0a;letter-spacing:0.037px;">Activity</div>
<div class="t" style="left:110.70px;top:8.50px;font-size:8.5px;line-height:8.5px;color:#2b2bf0;letter-spacing:-0.821px;text-decoration:underline;text-decoration-thickness:1px;text-underline-offset:1px;text-decoration-skip-ink:none;">Demand DC to AC</div>
<div class="t" style="left:171.25px;top:8.50px;font-size:8.5px;line-height:8.5px;color:#0a0a0a;letter-spacing:-0.018px;">is started!</div>
<div class="a" style="left:211.9px;top:10px;width:3.0px;height:2.5px;background:#262626;border-radius:0.5px;"></div>
<div class="a" style="left:216.9px;top:10px;width:3.0px;height:2.5px;background:#262626;border-radius:0.5px;"></div>
<div class="a" style="left:221.9px;top:10px;width:3.0px;height:2.5px;background:#262626;border-radius:0.5px;"></div>
<div class="a" style="left:226.9px;top:10px;width:3.0px;height:2.5px;background:#262626;border-radius:0.5px;"></div>
<div class="t" style="left:1.00px;top:18.80px;font-size:8.5px;line-height:8.5px;color:#0a0a0a;letter-spacing:0.063px;">00:00:05,212 :</div>
<div class="a" style="left:60.0px;top:20px;width:3.0px;height:2.5px;background:#262626;border-radius:0.5px;"></div>
<div class="a" style="left:65.0px;top:20px;width:3.0px;height:2.5px;background:#262626;border-radius:0.5px;"></div>
<div class="a" style="left:70.0px;top:20px;width:3.0px;height:2.5px;background:#262626;border-radius:0.5px;"></div>
<div class="a" style="left:75.0px;top:20px;width:3.0px;height:2.5px;background:#262626;border-radius:0.5px;"></div>
<div class="t" style="left:81.70px;top:18.80px;font-size:8.5px;line-height:8.5px;color:#0a0a0a;letter-spacing:0.037px;">Activity</div>
<div class="t" style="left:110.70px;top:18.80px;font-size:8.5px;line-height:8.5px;color:#2b2bf0;letter-spacing:-0.142px;text-decoration:underline;text-decoration-thickness:1px;text-underline-offset:1px;text-decoration-skip-ink:none;">Acquire Acceleration Request</div>
<div class="t" style="left:220.50px;top:18.80px;font-size:8.5px;line-height:8.5px;color:#0a0a0a;letter-spacing:-0.087px;">execution is terminated.</div>
<div class="a" style="left:312.3px;top:20px;width:3.0px;height:2.5px;background:#262626;border-radius:0.5px;"></div>
<div class="a" style="left:317.3px;top:20px;width:3.0px;height:2.5px;background:#262626;border-radius:0.5px;"></div>
<div class="a" style="left:322.3px;top:20px;width:3.0px;height:2.5px;background:#262626;border-radius:0.5px;"></div>
<div class="a" style="left:327.3px;top:20px;width:3.0px;height:2.5px;background:#262626;border-radius:0.5px;"></div>
<div class="t" style="left:1.00px;top:29.10px;font-size:8.5px;line-height:8.5px;color:#0a0a0a;letter-spacing:0.063px;">00:00:07,616 :</div>
<div class="a" style="left:60.0px;top:30px;width:3.0px;height:2.5px;background:#262626;border-radius:0.5px;"></div>
<div class="a" style="left:65.0px;top:30px;width:3.0px;height:2.5px;background:#262626;border-radius:0.5px;"></div>
<div class="a" style="left:70.0px;top:30px;width:3.0px;height:2.5px;background:#262626;border-radius:0.5px;"></div>
<div class="a" style="left:75.0px;top:30px;width:3.0px;height:2.5px;background:#262626;border-radius:0.5px;"></div>
<div class="t" style="left:81.70px;top:29.10px;font-size:8.5px;line-height:8.5px;color:#0a0a0a;letter-spacing:0.037px;">Activity</div>
<div class="t" style="left:110.70px;top:29.10px;font-size:8.5px;line-height:8.5px;color:#2b2bf0;letter-spacing:-0.242px;text-decoration:underline;text-decoration-thickness:1px;text-underline-offset:1px;text-decoration-skip-ink:none;">Analyze Request</div>
<div class="t" style="left:173.70px;top:29.10px;font-size:8.5px;line-height:8.5px;color:#0a0a0a;letter-spacing:-0.087px;">execution is terminated.</div>
<div class="a" style="left:265.5px;top:30px;width:3.0px;height:2.5px;background:#262626;border-radius:0.5px;"></div>
<div class="a" style="left:270.5px;top:30px;width:3.0px;height:2.5px;background:#262626;border-radius:0.5px;"></div>
<div class="a" style="left:275.5px;top:30px;width:3.0px;height:2.5px;background:#262626;border-radius:0.5px;"></div>
<div class="a" style="left:280.5px;top:30px;width:3.0px;height:2.5px;background:#262626;border-radius:0.5px;"></div>
<div class="t" style="left:1.00px;top:39.40px;font-size:8.5px;line-height:8.5px;color:#0a0a0a;letter-spacing:0.063px;">00:00:08,420 :</div>
<div class="a" style="left:60.0px;top:40px;width:3.0px;height:2.5px;background:#262626;border-radius:0.5px;"></div>
<div class="a" style="left:65.0px;top:40px;width:3.0px;height:2.5px;background:#262626;border-radius:0.5px;"></div>
<div class="a" style="left:70.0px;top:40px;width:3.0px;height:2.5px;background:#262626;border-radius:0.5px;"></div>
<div class="a" style="left:75.0px;top:40px;width:3.0px;height:2.5px;background:#262626;border-radius:0.5px;"></div>
<div class="t" style="left:81.70px;top:39.40px;font-size:8.5px;line-height:8.5px;color:#0a0a0a;letter-spacing:0.037px;">Activity</div>
<div class="t" style="left:110.70px;top:39.40px;font-size:8.5px;line-height:8.5px;color:#2b2bf0;letter-spacing:-0.247px;text-decoration:underline;text-decoration-thickness:1px;text-underline-offset:1px;text-decoration-skip-ink:none;">Control Power Flow</div>
<div class="t" style="left:182.80px;top:39.40px;font-size:8.5px;line-height:8.5px;color:#0a0a0a;letter-spacing:-0.087px;">execution is terminated.</div>
<div class="a" style="left:274.6px;top:40px;width:3.0px;height:2.5px;background:#262626;border-radius:0.5px;"></div>
<div class="a" style="left:279.6px;top:40px;width:3.0px;height:2.5px;background:#262626;border-radius:0.5px;"></div>
<div class="a" style="left:284.6px;top:40px;width:3.0px;height:2.5px;background:#262626;border-radius:0.5px;"></div>
<div class="a" style="left:289.6px;top:40px;width:3.0px;height:2.5px;background:#262626;border-radius:0.5px;"></div>
<div class="t" style="left:1.00px;top:49.70px;font-size:8.5px;line-height:8.5px;color:#0a0a0a;letter-spacing:0.063px;">00:00:10,022 :</div>
<div class="a" style="left:60.0px;top:51px;width:3.0px;height:2.5px;background:#262626;border-radius:0.5px;"></div>
<div class="a" style="left:65.0px;top:51px;width:3.0px;height:2.5px;background:#262626;border-radius:0.5px;"></div>
<div class="a" style="left:70.0px;top:51px;width:3.0px;height:2.5px;background:#262626;border-radius:0.5px;"></div>
<div class="a" style="left:75.0px;top:51px;width:3.0px;height:2.5px;background:#262626;border-radius:0.5px;"></div>
<div class="t" style="left:81.70px;top:49.70px;font-size:8.5px;line-height:8.5px;color:#0a0a0a;letter-spacing:0.037px;">Activity</div>
<div class="t" style="left:110.70px;top:49.70px;font-size:8.5px;line-height:8.5px;color:#2b2bf0;letter-spacing:-0.144px;text-decoration:underline;text-decoration-thickness:1px;text-underline-offset:1px;text-decoration-skip-ink:none;">Generate Rotational Power</div>
<div class="t" style="left:211.90px;top:49.70px;font-size:8.5px;line-height:8.5px;color:#0a0a0a;letter-spacing:-0.087px;">execution is terminated.</div>
<div class="a" style="left:303.7px;top:51px;width:3.0px;height:2.5px;background:#262626;border-radius:0.5px;"></div>
<div class="a" style="left:308.7px;top:51px;width:3.0px;height:2.5px;background:#262626;border-radius:0.5px;"></div>
<div class="a" style="left:313.7px;top:51px;width:3.0px;height:2.5px;background:#262626;border-radius:0.5px;"></div>
<div class="a" style="left:318.7px;top:51px;width:3.0px;height:2.5px;background:#262626;border-radius:0.5px;"></div>
<div class="t" style="left:1.00px;top:60.00px;font-size:8.5px;line-height:8.5px;color:#0a0a0a;letter-spacing:0.111px;">00:00:11,626 :</div>
<div class="a" style="left:60.0px;top:61px;width:3.0px;height:2.5px;background:#262626;border-radius:0.5px;"></div>
<div class="a" style="left:65.0px;top:61px;width:3.0px;height:2.5px;background:#262626;border-radius:0.5px;"></div>
<div class="a" style="left:70.0px;top:61px;width:3.0px;height:2.5px;background:#262626;border-radius:0.5px;"></div>
<div class="a" style="left:75.0px;top:61px;width:3.0px;height:2.5px;background:#262626;border-radius:0.5px;"></div>
<div class="t" style="left:81.70px;top:60.00px;font-size:8.5px;line-height:8.5px;color:#0a0a0a;letter-spacing:0.037px;">Activity</div>
<div class="t" style="left:110.70px;top:60.00px;font-size:8.5px;line-height:8.5px;color:#2b2bf0;letter-spacing:-0.821px;text-decoration:underline;text-decoration-thickness:1px;text-underline-offset:1px;text-decoration-skip-ink:none;">Demand DC to AC</div>
<div class="t" style="left:171.25px;top:60.00px;font-size:8.5px;line-height:8.5px;color:#0a0a0a;letter-spacing:-0.087px;">execution is terminated.</div>
<div class="a" style="left:263.1px;top:61px;width:3.0px;height:2.5px;background:#262626;border-radius:0.5px;"></div>
<div class="a" style="left:268.1px;top:61px;width:3.0px;height:2.5px;background:#262626;border-radius:0.5px;"></div>
<div class="a" style="left:273.1px;top:61px;width:3.0px;height:2.5px;background:#262626;border-radius:0.5px;"></div>
<div class="a" style="left:278.1px;top:61px;width:3.0px;height:2.5px;background:#262626;border-radius:0.5px;"></div>
<div class="t" style="left:1.00px;top:70.30px;font-size:8.5px;line-height:8.5px;color:#0a0a0a;letter-spacing:0.063px;">00:00:12,430 :</div>
<div class="a" style="left:60.0px;top:71px;width:3.0px;height:2.5px;background:#262626;border-radius:0.5px;"></div>
<div class="a" style="left:65.0px;top:71px;width:3.0px;height:2.5px;background:#262626;border-radius:0.5px;"></div>
<div class="a" style="left:70.0px;top:71px;width:3.0px;height:2.5px;background:#262626;border-radius:0.5px;"></div>
<div class="a" style="left:75.0px;top:71px;width:3.0px;height:2.5px;background:#262626;border-radius:0.5px;"></div>
<div class="t" style="left:81.70px;top:70.30px;font-size:8.5px;line-height:8.5px;color:#0a0a0a;letter-spacing:0.037px;">Activity</div>
<div class="t" style="left:110.70px;top:70.30px;font-size:8.5px;line-height:8.5px;color:#2b2bf0;letter-spacing:-0.352px;text-decoration:underline;text-decoration-thickness:1px;text-underline-offset:1px;text-decoration-skip-ink:none;">Convert DC to AC</div>
<div class="t" style="left:175.10px;top:70.30px;font-size:8.5px;line-height:8.5px;color:#0a0a0a;letter-spacing:-0.087px;">execution is terminated.</div>
<div class="a" style="left:266.9px;top:71px;width:3.0px;height:2.5px;background:#262626;border-radius:0.5px;"></div>
<div class="a" style="left:271.9px;top:71px;width:3.0px;height:2.5px;background:#262626;border-radius:0.5px;"></div>
<div class="a" style="left:276.9px;top:71px;width:3.0px;height:2.5px;background:#262626;border-radius:0.5px;"></div>
<div class="a" style="left:281.9px;top:71px;width:3.0px;height:2.5px;background:#262626;border-radius:0.5px;"></div>
<div class="t" style="left:1.00px;top:80.60px;font-size:8.5px;line-height:8.5px;color:#0a0a0a;letter-spacing:0.063px;">00:00:13,232 :</div>
<div class="a" style="left:60.0px;top:82px;width:3.0px;height:2.5px;background:#262626;border-radius:0.5px;"></div>
<div class="a" style="left:65.0px;top:82px;width:3.0px;height:2.5px;background:#262626;border-radius:0.5px;"></div>
<div class="a" style="left:70.0px;top:82px;width:3.0px;height:2.5px;background:#262626;border-radius:0.5px;"></div>
<div class="a" style="left:75.0px;top:82px;width:3.0px;height:2.5px;background:#262626;border-radius:0.5px;"></div>
<div class="t" style="left:81.70px;top:80.60px;font-size:8.5px;line-height:8.5px;color:#0a0a0a;letter-spacing:0.037px;">Activity</div>
<div class="t" style="left:110.70px;top:80.60px;font-size:8.5px;line-height:8.5px;color:#2b2bf0;letter-spacing:-0.821px;text-decoration:underline;text-decoration-thickness:1px;text-underline-offset:1px;text-decoration-skip-ink:none;">Demand DC to AC</div>
<div class="t" style="left:171.25px;top:80.60px;font-size:8.5px;line-height:8.5px;color:#0a0a0a;letter-spacing:-0.087px;">execution is terminated.</div>
<div class="a" style="left:263.1px;top:82px;width:3.0px;height:2.5px;background:#262626;border-radius:0.5px;"></div>
<div class="a" style="left:268.1px;top:82px;width:3.0px;height:2.5px;background:#262626;border-radius:0.5px;"></div>
<div class="a" style="left:273.1px;top:82px;width:3.0px;height:2.5px;background:#262626;border-radius:0.5px;"></div>
<div class="a" style="left:278.1px;top:82px;width:3.0px;height:2.5px;background:#262626;border-radius:0.5px;"></div>
<div class="t" style="left:1.00px;top:90.90px;font-size:8.5px;line-height:8.5px;color:#0a0a0a;letter-spacing:0.063px;">00:00:13,271 :</div>
<div class="a" style="left:60.0px;top:92px;width:3.0px;height:2.5px;background:#262626;border-radius:0.5px;"></div>
<div class="a" style="left:65.0px;top:92px;width:3.0px;height:2.5px;background:#262626;border-radius:0.5px;"></div>
<div class="a" style="left:70.0px;top:92px;width:3.0px;height:2.5px;background:#262626;border-radius:0.5px;"></div>
<div class="a" style="left:75.0px;top:92px;width:3.0px;height:2.5px;background:#262626;border-radius:0.5px;"></div>
<div class="t" style="left:81.70px;top:90.90px;font-size:8.5px;line-height:8.5px;color:#0a0a0a;letter-spacing:0.037px;">Activity</div>
<div class="t" style="left:110.70px;top:90.90px;font-size:8.5px;line-height:8.5px;color:#2b2bf0;letter-spacing:-0.183px;text-decoration:underline;text-decoration-thickness:1px;text-underline-offset:1px;text-decoration-skip-ink:none;">Provide Electrical Energy</div>
<div class="t" style="left:203.40px;top:90.90px;font-size:8.5px;line-height:8.5px;color:#0a0a0a;letter-spacing:-0.087px;">execution is terminated.</div>
<div class="a" style="left:295.2px;top:92px;width:3.0px;height:2.5px;background:#262626;border-radius:0.5px;"></div>
<div class="a" style="left:300.2px;top:92px;width:3.0px;height:2.5px;background:#262626;border-radius:0.5px;"></div>
<div class="a" style="left:305.2px;top:92px;width:3.0px;height:2.5px;background:#262626;border-radius:0.5px;"></div>
<div class="a" style="left:310.2px;top:92px;width:3.0px;height:2.5px;background:#262626;border-radius:0.5px;"></div>
<div class="t" style="left:1.00px;top:101.20px;font-size:8.5px;line-height:8.5px;color:#0a0a0a;letter-spacing:0.063px;">00:00:19,700 :</div>
<div class="a" style="left:60.0px;top:102px;width:3.0px;height:2.5px;background:#262626;border-radius:0.5px;"></div>
<div class="a" style="left:65.0px;top:102px;width:3.0px;height:2.5px;background:#262626;border-radius:0.5px;"></div>
<div class="a" style="left:70.0px;top:102px;width:3.0px;height:2.5px;background:#262626;border-radius:0.5px;"></div>
<div class="a" style="left:75.0px;top:102px;width:3.0px;height:2.5px;background:#262626;border-radius:0.5px;"></div>
<div class="t" style="left:81.70px;top:101.20px;font-size:8.5px;line-height:8.5px;color:#0a0a0a;letter-spacing:0.037px;">Activity</div>
<div class="t" style="left:110.70px;top:101.20px;font-size:8.5px;line-height:8.5px;color:#2b2bf0;letter-spacing:0.053px;text-decoration:underline;text-decoration-thickness:1px;text-underline-offset:1px;text-decoration-skip-ink:none;">Transfer Torque to wheels</div>
<div class="t" style="left:211.90px;top:101.20px;font-size:8.5px;line-height:8.5px;color:#0a0a0a;letter-spacing:-0.087px;">execution is terminated.</div>
<div class="a" style="left:303.7px;top:102px;width:3.0px;height:2.5px;background:#262626;border-radius:0.5px;"></div>
<div class="a" style="left:308.7px;top:102px;width:3.0px;height:2.5px;background:#262626;border-radius:0.5px;"></div>
<div class="a" style="left:313.7px;top:102px;width:3.0px;height:2.5px;background:#262626;border-radius:0.5px;"></div>
<div class="a" style="left:318.7px;top:102px;width:3.0px;height:2.5px;background:#262626;border-radius:0.5px;"></div>
<div class="t" style="left:1.00px;top:111.50px;font-size:8.5px;line-height:8.5px;color:#0a0a0a;letter-spacing:0.063px;">00:00:20,503 :</div>
<div class="a" style="left:60.0px;top:113px;width:3.0px;height:2.5px;background:#262626;border-radius:0.5px;"></div>
<div class="a" style="left:65.0px;top:113px;width:3.0px;height:2.5px;background:#262626;border-radius:0.5px;"></div>
<div class="a" style="left:70.0px;top:113px;width:3.0px;height:2.5px;background:#262626;border-radius:0.5px;"></div>
<div class="a" style="left:75.0px;top:113px;width:3.0px;height:2.5px;background:#262626;border-radius:0.5px;"></div>
<div class="t" style="left:81.70px;top:111.50px;font-size:8.5px;line-height:8.5px;color:#0a0a0a;letter-spacing:0.037px;">Activity</div>
<div class="t" style="left:110.70px;top:111.50px;font-size:8.5px;line-height:8.5px;color:#2b2bf0;letter-spacing:-0.116px;text-decoration:underline;text-decoration-thickness:1px;text-underline-offset:1px;text-decoration-skip-ink:none;">EV Functional Architecture</div>
<div class="t" style="left:210.10px;top:111.50px;font-size:8.5px;line-height:8.5px;color:#0a0a0a;letter-spacing:-0.087px;">execution is terminated.</div>
<div class="a" style="left:301.9px;top:113px;width:3.0px;height:2.5px;background:#262626;border-radius:0.5px;"></div>
<div class="a" style="left:306.9px;top:113px;width:3.0px;height:2.5px;background:#262626;border-radius:0.5px;"></div>
<div class="a" style="left:311.9px;top:113px;width:3.0px;height:2.5px;background:#262626;border-radius:0.5px;"></div>
<div class="a" style="left:316.9px;top:113px;width:3.0px;height:2.5px;background:#262626;border-radius:0.5px;"></div>
<div class="t" style="left:1.00px;top:121.80px;font-size:8.5px;line-height:8.5px;color:#0a0a0a;letter-spacing:0.063px;">00:00:00,000 :</div>
<div class="a" style="left:60.0px;top:123px;width:3.0px;height:2.5px;background:#262626;border-radius:0.5px;"></div>
<div class="a" style="left:65.0px;top:123px;width:3.0px;height:2.5px;background:#262626;border-radius:0.5px;"></div>
<div class="a" style="left:70.0px;top:123px;width:3.0px;height:2.5px;background:#262626;border-radius:0.5px;"></div>
<div class="a" style="left:75.0px;top:123px;width:3.0px;height:2.5px;background:#262626;border-radius:0.5px;"></div>
<div class="t" style="left:81.70px;top:121.80px;font-size:8.5px;line-height:8.5px;color:#0a0a0a;letter-spacing:0.037px;">Activity</div>
<div class="t" style="left:110.70px;top:121.80px;font-size:8.5px;line-height:8.5px;color:#2b2bf0;letter-spacing:-0.116px;text-decoration:underline;text-decoration-thickness:1px;text-underline-offset:1px;text-decoration-skip-ink:none;">EV Functional Architecture</div>
<div class="t" style="left:210.10px;top:121.80px;font-size:8.5px;line-height:8.5px;color:#0a0a0a;letter-spacing:-0.153px;">is initialized.</div>
<div class="a" style="left:257.8px;top:123px;width:3.0px;height:2.5px;background:#262626;border-radius:0.5px;"></div>
<div class="a" style="left:262.8px;top:123px;width:3.0px;height:2.5px;background:#262626;border-radius:0.5px;"></div>
<div class="a" style="left:267.8px;top:123px;width:3.0px;height:2.5px;background:#262626;border-radius:0.5px;"></div>
<div class="a" style="left:272.8px;top:123px;width:3.0px;height:2.5px;background:#262626;border-radius:0.5px;"></div>
<div class="t" style="left:1.00px;top:132.10px;font-size:8.5px;line-height:8.5px;color:#0a0a0a;letter-spacing:0.063px;">00:00:00,000 :</div>
<div class="a" style="left:60.0px;top:133px;width:3.0px;height:2.5px;background:#262626;border-radius:0.5px;"></div>
<div class="a" style="left:65.0px;top:133px;width:3.0px;height:2.5px;background:#262626;border-radius:0.5px;"></div>
<div class="a" style="left:70.0px;top:133px;width:3.0px;height:2.5px;background:#262626;border-radius:0.5px;"></div>
<div class="a" style="left:75.0px;top:133px;width:3.0px;height:2.5px;background:#262626;border-radius:0.5px;"></div>
<div class="t" style="left:81.70px;top:132.10px;font-size:8.5px;line-height:8.5px;color:#0a0a0a;letter-spacing:0.037px;">Activity</div>
<div class="t" style="left:110.70px;top:132.10px;font-size:8.5px;line-height:8.5px;color:#2b2bf0;letter-spacing:-0.116px;text-decoration:underline;text-decoration-thickness:1px;text-underline-offset:1px;text-decoration-skip-ink:none;">EV Functional Architecture</div>
<div class="t" style="left:210.10px;top:132.10px;font-size:8.5px;line-height:8.5px;color:#0a0a0a;letter-spacing:-0.018px;">is started!</div>
<div class="a" style="left:250.8px;top:133px;width:3.0px;height:2.5px;background:#262626;border-radius:0.5px;"></div>
<div class="a" style="left:255.8px;top:133px;width:3.0px;height:2.5px;background:#262626;border-radius:0.5px;"></div>
<div class="a" style="left:260.8px;top:133px;width:3.0px;height:2.5px;background:#262626;border-radius:0.5px;"></div>
<div class="a" style="left:265.8px;top:133px;width:3.0px;height:2.5px;background:#262626;border-radius:0.5px;"></div>
<div class="t" style="left:1.00px;top:142.40px;font-size:8.5px;line-height:8.5px;color:#0a0a0a;letter-spacing:0.063px;">00:00:01,614 :</div>
<div class="a" style="left:60.0px;top:143px;width:3.0px;height:2.5px;background:#262626;border-radius:0.5px;"></div>
<div class="a" style="left:65.0px;top:143px;width:3.0px;height:2.5px;background:#262626;border-radius:0.5px;"></div>
<div class="a" style="left:70.0px;top:143px;width:3.0px;height:2.5px;background:#262626;border-radius:0.5px;"></div>
<div class="a" style="left:75.0px;top:143px;width:3.0px;height:2.5px;background:#262626;border-radius:0.5px;"></div>
<div class="t" style="left:81.70px;top:142.40px;font-size:8.5px;line-height:8.5px;color:#0a0a0a;letter-spacing:0.037px;">Activity</div>
<div class="t" style="left:110.70px;top:142.40px;font-size:8.5px;line-height:8.5px;color:#2b2bf0;letter-spacing:-0.142px;text-decoration:underline;text-decoration-thickness:1px;text-underline-offset:1px;text-decoration-skip-ink:none;">Acquire Acceleration Request</div>
<div class="t" style="left:220.50px;top:142.40px;font-size:8.5px;line-height:8.5px;color:#0a0a0a;letter-spacing:-0.087px;">execution is terminated.</div>
<div class="a" style="left:312.3px;top:143px;width:3.0px;height:2.5px;background:#262626;border-radius:0.5px;"></div>
<div class="a" style="left:317.3px;top:143px;width:3.0px;height:2.5px;background:#262626;border-radius:0.5px;"></div>
<div class="a" style="left:322.3px;top:143px;width:3.0px;height:2.5px;background:#262626;border-radius:0.5px;"></div>
<div class="a" style="left:327.3px;top:143px;width:3.0px;height:2.5px;background:#262626;border-radius:0.5px;"></div>
<div class="t" style="left:1.00px;top:152.70px;font-size:8.5px;line-height:8.5px;color:#0a0a0a;letter-spacing:0.063px;">00:00:04,018 :</div>
<div class="a" style="left:60.0px;top:154px;width:3.0px;height:2.5px;background:#262626;border-radius:0.5px;"></div>
<div class="a" style="left:65.0px;top:154px;width:3.0px;height:2.5px;background:#262626;border-radius:0.5px;"></div>
<div class="a" style="left:70.0px;top:154px;width:3.0px;height:2.5px;background:#262626;border-radius:0.5px;"></div>
<div class="a" style="left:75.0px;top:154px;width:3.0px;height:2.5px;background:#262626;border-radius:0.5px;"></div>
<div class="t" style="left:81.70px;top:152.70px;font-size:8.5px;line-height:8.5px;color:#0a0a0a;letter-spacing:0.037px;">Activity</div>
<div class="t" style="left:110.70px;top:152.70px;font-size:8.5px;line-height:8.5px;color:#2b2bf0;letter-spacing:-0.242px;text-decoration:underline;text-decoration-thickness:1px;text-underline-offset:1px;text-decoration-skip-ink:none;">Analyze Request</div>
<div class="t" style="left:173.70px;top:152.70px;font-size:8.5px;line-height:8.5px;color:#0a0a0a;letter-spacing:-0.087px;">execution is terminated.</div>
<div class="a" style="left:265.5px;top:154px;width:3.0px;height:2.5px;background:#262626;border-radius:0.5px;"></div>
<div class="a" style="left:270.5px;top:154px;width:3.0px;height:2.5px;background:#262626;border-radius:0.5px;"></div>
<div class="a" style="left:275.5px;top:154px;width:3.0px;height:2.5px;background:#262626;border-radius:0.5px;"></div>
<div class="a" style="left:280.5px;top:154px;width:3.0px;height:2.5px;background:#262626;border-radius:0.5px;"></div>
<div class="t" style="left:1.00px;top:163.00px;font-size:8.5px;line-height:8.5px;color:#0a0a0a;letter-spacing:0.063px;">00:00:06,424 :</div>
<div class="a" style="left:60.0px;top:164px;width:3.0px;height:2.5px;background:#262626;border-radius:0.5px;"></div>
<div class="a" style="left:65.0px;top:164px;width:3.0px;height:2.5px;background:#262626;border-radius:0.5px;"></div>
<div class="a" style="left:70.0px;top:164px;width:3.0px;height:2.5px;background:#262626;border-radius:0.5px;"></div>
<div class="a" style="left:75.0px;top:164px;width:3.0px;height:2.5px;background:#262626;border-radius:0.5px;"></div>
<div class="t" style="left:81.70px;top:163.00px;font-size:8.5px;line-height:8.5px;color:#0a0a0a;letter-spacing:0.037px;">Activity</div>
<div class="t" style="left:110.70px;top:163.00px;font-size:8.5px;line-height:8.5px;color:#2b2bf0;letter-spacing:-0.144px;text-decoration:underline;text-decoration-thickness:1px;text-underline-offset:1px;text-decoration-skip-ink:none;">Generate Rotational Power</div>
<div class="t" style="left:211.90px;top:163.00px;font-size:8.5px;line-height:8.5px;color:#0a0a0a;letter-spacing:-0.087px;">execution is terminated.</div>
<div class="a" style="left:303.7px;top:164px;width:3.0px;height:2.5px;background:#262626;border-radius:0.5px;"></div>
<div class="a" style="left:308.7px;top:164px;width:3.0px;height:2.5px;background:#262626;border-radius:0.5px;"></div>
<div class="a" style="left:313.7px;top:164px;width:3.0px;height:2.5px;background:#262626;border-radius:0.5px;"></div>
<div class="a" style="left:318.7px;top:164px;width:3.0px;height:2.5px;background:#262626;border-radius:0.5px;"></div>
<div class="t" style="left:1.00px;top:173.30px;font-size:8.5px;line-height:8.5px;color:#0a0a0a;letter-spacing:0.063px;">00:00:08,826 :</div>
<div class="a" style="left:60.0px;top:174px;width:3.0px;height:2.5px;background:#262626;border-radius:0.5px;"></div>
<div class="a" style="left:65.0px;top:174px;width:3.0px;height:2.5px;background:#262626;border-radius:0.5px;"></div>
<div class="a" style="left:70.0px;top:174px;width:3.0px;height:2.5px;background:#262626;border-radius:0.5px;"></div>
<div class="a" style="left:75.0px;top:174px;width:3.0px;height:2.5px;background:#262626;border-radius:0.5px;"></div>
<div class="t" style="left:81.70px;top:173.30px;font-size:8.5px;line-height:8.5px;color:#0a0a0a;letter-spacing:0.037px;">Activity</div>
<div class="t" style="left:110.70px;top:173.30px;font-size:8.5px;line-height:8.5px;color:#2b2bf0;letter-spacing:-0.821px;text-decoration:underline;text-decoration-thickness:1px;text-underline-offset:1px;text-decoration-skip-ink:none;">Demand DC to AC</div>
<div class="t" style="left:171.25px;top:173.30px;font-size:8.5px;line-height:8.5px;color:#0a0a0a;letter-spacing:-0.087px;">execution is terminated.</div>
<div class="a" style="left:263.1px;top:174px;width:3.0px;height:2.5px;background:#262626;border-radius:0.5px;"></div>
<div class="a" style="left:268.1px;top:174px;width:3.0px;height:2.5px;background:#262626;border-radius:0.5px;"></div>
<div class="a" style="left:273.1px;top:174px;width:3.0px;height:2.5px;background:#262626;border-radius:0.5px;"></div>
<div class="a" style="left:278.1px;top:174px;width:3.0px;height:2.5px;background:#262626;border-radius:0.5px;"></div>
</div>
<div class="a" style="left:579.4px;top:463.6px;width:12.2px;height:177px;background:#f0f0f0;"></div>
<div class="a" style="left:579.4px;top:562.3px;width:12.2px;height:16.4px;background:#cdcdcd;"></div>
<svg style="left:582px;top:467.5px" width="7" height="4" viewBox="0 0 7 4"><path d="M0.5 3.5L3.5 0.5L6.5 3.5" fill="none" stroke="#333"/></svg>
<svg style="left:582px;top:632px" width="7" height="4" viewBox="0 0 7 4"><path d="M0.5 0.5L3.5 3.5L6.5 0.5" fill="none" stroke="#333"/></svg>
<div class="a" style="left:189.5px;top:641px;width:325px;height:14px;background:#ffffff;border:1px solid #c8c8c8;"></div>
<div class="t" style="left:192.00px;top:644.38px;font-size:9px;line-height:9px;color:#333;letter-spacing:-0.296px;">>></div>
<div class="a" style="left:514.5px;top:641px;width:77px;height:14px;background:#e8e8e8;border:1px solid #c8c8c8;"></div>
<div class="t" style="left:517.00px;top:644.68px;font-size:9px;line-height:9px;color:#222;letter-spacing:-0.101px;">(default)</div>
<svg style="left:583.5px;top:646.5px" width="7" height="4" viewBox="0 0 7 4"><path d="M0.5 0.5L3.5 3.5L6.5 0.5" fill="none" stroke="#666"/></svg>
<svg style="left:596px;top:428px" width="30" height="17"><path d="M1.5 16.5L17 2.5Q18.5 1 20.5 1H40V16.5Z" fill="#dce9f7" stroke="#a7bcd6"/></svg>
<div class="a" style="left:597.5px;top:444.3px;width:30px;height:211px;background:#f3f3f3;border:1px solid #a7bcd6;"></div>
<svg style="left:602px;top:449.8px" width="12" height="10" viewBox="0 0 12 10"><path d="M1.2 5.5Q1.2 1 6 1Q8.5 1 10 3" fill="none" stroke="#2b4fd0" stroke-width="2"/><path d="M10.8 0.5V4.2H7.2Z" fill="#2b4fd0"/><path d="M10.8 4.5Q10.8 9 6 9Q3.5 9 2 7" fill="none" stroke="#2b4fd0" stroke-width="2"/><path d="M1.2 9.5V5.8H4.8Z" fill="#2b4fd0"/></svg>
<div class="a" style="left:599.5px;top:463.8px;width:25px;height:177px;background:#ffffff;border-left:1px solid #a0a0a0;border-top:1px solid #c8c8c8;"></div>
<div class="t" style="left:604.00px;top:469.38px;font-size:9px;line-height:9px;color:#555;letter-spacing:-0.648px;">Nam</div>
<div class="a" style="left:600.5px;top:481px;width:20px;height:1px;background:#f1f1f1;"></div>
<div class="a" style="left:600.5px;top:496px;width:20px;height:1px;background:#f1f1f1;"></div>
<div class="a" style="left:600.5px;top:511px;width:20px;height:1px;background:#f1f1f1;"></div>
<div class="a" style="left:600.5px;top:526px;width:20px;height:1px;background:#f1f1f1;"></div>
<div class="a" style="left:600.5px;top:541px;width:20px;height:1px;background:#f1f1f1;"></div>
<div class="a" style="left:600.5px;top:556px;width:20px;height:1px;background:#f1f1f1;"></div>
<div class="a" style="left:600.5px;top:571px;width:20px;height:1px;background:#f1f1f1;"></div>
<div class="a" style="left:600.5px;top:586px;width:20px;height:1px;background:#f1f1f1;"></div>
<div class="a" style="left:600.5px;top:601px;width:20px;height:1px;background:#f1f1f1;"></div>
<div class="a" style="left:600.5px;top:616px;width:20px;height:1px;background:#f1f1f1;"></div>
<div class="a" style="left:600.5px;top:631px;width:20px;height:1px;background:#f1f1f1;"></div>
<div class="a" style="left:600.5px;top:527.1px;width:20px;height:13.6px;background:#0a74da;"></div>
<svg style="left:601.5px;top:485.8px" width="8" height="8" viewBox="0 0 8 8"><rect x="0.5" y="0.5" width="7" height="7" fill="#fff" stroke="#777"/><path d="M2 4H6" stroke="#333"/></svg>
<svg style="left:612px;top:484px" width="10" height="10" viewBox="0 0 10 10"><rect x="0.5" y="1.5" width="9" height="8" fill="#e6c77a" stroke="#8a6a30"/><rect x="2" y="3.5" width="6" height="3" fill="#f5e6b8"/></svg>
<svg style="left:611.5px;top:500px" width="8" height="8" viewBox="0 0 8 8"><rect x="0.5" y="0.5" width="7" height="7" fill="#fff" stroke="#777"/><path d="M2 4H6M4 2V6" stroke="#333"/></svg>
<svg style="left:611.5px;top:515px" width="8" height="8" viewBox="0 0 8 8"><rect x="0.5" y="0.5" width="7" height="7" fill="#fff" stroke="#777"/><path d="M2 4H6M4 2V6" stroke="#333"/></svg>
<svg style="left:611.5px;top:530px" width="8" height="8" viewBox="0 0 8 8"><rect x="0.5" y="0.5" width="7" height="7" fill="#fff" stroke="#777"/><path d="M2 4H6" stroke="#333"/></svg>
<svg style="left:615px;top:494px" width="1" height="147" viewBox="0 0 1 147"><path d="M0.5 0V147" stroke="#888" stroke-dasharray="1.5 1.5"/></svg>
<div class="a" style="left:600.5px;top:641px;width:20px;height:14px;background:#e0e0e0;"></div>
<div class="a" style="left:600.5px;top:641px;width:13px;height:14px;background:#f3f3f3;"></div>
<svg style="left:604px;top:644.5px" width="5" height="8" viewBox="0 0 5 8"><path d="M4 0.5L0.8 3.8L4 7" fill="none" stroke="#222" stroke-width="1.1"/></svg>
<div class="a" style="left:0px;top:654.5px;width:620px;height:1px;background:#a8aeb6;"></div>
<div class="a" style="left:0px;top:655.5px;width:620px;height:4.8px;background:#d4e5fa;"></div>
<div class="a" style="left:0px;top:660.2px;width:620px;height:1px;background:#90aed6;"></div>
<div class="a" style="left:0px;top:661.2px;width:620px;height:3px;background:#d6e6fa;"></div>
<div class="a" style="left:200.5px;top:82px;width:342.5px;height:467.5px;background:#f0f0f0;border:1px solid #b8bec8;border-left-color:#c4cad6;border-right-color:#6e6e6e;border-top-color:#d8dbe0;"></div>
<div class="a" style="left:203px;top:85px;width:70px;height:18px;background:linear-gradient(#fef6e8,#fde4b4 55%,#fbcb72);clip-path:polygon(1px 17px,15.5px 2px,16.5px 1px,66px 1px,66.5px 3px,66.5px 17px);"></div>
<svg style="left:203px;top:85px" width="70" height="18"><path d="M1 17L15.5 2Q16.5 1 18.5 1H64.5Q66.5 1 66.5 3V17" fill="none" stroke="#b9b2a6" stroke-width="0.9"/></svg>
<svg style="left:223.8px;top:88px" width="11" height="11" viewBox="0 0 11 11"><circle cx="5.5" cy="5.5" r="3.4" fill="#fff" stroke="#666" stroke-width="1.2"/><path d="M5.5 0.5V2.3M5.5 8.7V10.5M0.5 5.5H2.3M8.7 5.5H10.5M2 2L3.3 3.3M7.7 7.7L9 9M9 2L7.7 3.3M3.3 7.7L2 9" stroke="#666" stroke-width="1.4"/><circle cx="5.5" cy="5.5" r="1.6" fill="#fff" stroke="#888" stroke-width="0.8"/></svg>
<div class="t" style="left:239.00px;top:89.38px;font-size:9px;line-height:9px;color:#0a0a0a;letter-spacing:-0.385px;">Vehicle</div>
<div class="a" style="left:201.6px;top:101.9px;width:338.4px;height:445.6px;background:#e6e6e6;border:2.2px solid #e3b666;border-top:none;"></div>
<div class="a" style="left:540px;top:115.6px;width:1.6px;height:431.9px;background:#d4dbe8;"></div>
<div class="a" style="left:536.1px;top:115.6px;width:1.2px;height:429.7px;background:#f6f6f6;"></div>
<div class="a" style="left:537.3px;top:115.6px;width:0.8px;height:429.7px;background:#c8d0e0;"></div>
<div class="a" style="left:201.6px;top:101.9px;width:338.4px;height:13.7px;background:linear-gradient(#fdebc6 0%,#fcd48a 35%,#fbc55c 60%,#fbc356 100%);border-top:1px solid #e8b860;"></div>
<div class="t" style="left:208.00px;top:105.48px;font-size:9px;line-height:9px;color:#0a0a0a;letter-spacing:-0.419px;">Vehicle</div>
<svg style="left:524px;top:106px" width="7" height="7" viewBox="0 0 7 7"><path d="M0.8 0.8L6.2 6.2M6.2 0.8L0.8 6.2" stroke="#2a5aa0" stroke-width="1"/></svg>
<div class="a" style="left:204.2px;top:115.6px;width:1px;height:431.5px;background:#d4dae6;"></div>
<div class="a" style="left:205px;top:115.6px;width:1.6px;height:146px;background:#ffffff;"></div>
<div class="a" style="left:204.2px;top:259.7px;width:312px;height:1.8px;background:#ffffff;"></div>
<div class="a" style="left:514.4px;top:115.6px;width:1.6px;height:146px;background:#ffffff;"></div>
<div class="a" style="left:207.8px;top:115.8px;width:306.6px;height:143.9px;background:#000000;border:2.4px solid #0b380b;border-top:0.6px solid #0b380b;border-left-width:1.3px;border-radius:0 0 2.5px 2.5px;"></div>
<div class="a" style="left:516px;top:115.6px;width:20.1px;height:146px;background:#e8e8e8;"></div>
<svg style="left:214px;top:120px" width="35" height="27" viewBox="0 0 35 27"><path d="M17 1L22.5 7.3H11.5Z" fill="#fff"/><path d="M17 25.3L22.5 17.5H11.5Z" fill="#fff"/><path d="M1.4 12.9L9.6 7.5V18.3Z" fill="#fff"/><path d="M33.3 12.9L24.9 7.5V18.3Z" fill="#fff"/><rect x="14.5" y="6" width="5" height="2" fill="#fff"/><rect x="14.5" y="16.5" width="5" height="2" fill="#fff"/><rect x="8.5" y="10.5" width="2" height="5" fill="#fff"/><rect x="24" y="10.5" width="2" height="5" fill="#fff"/></svg>
<div class="a" style="left:262.1px;top:140.3px;width:198px;height:92.4px;background:#000;border:2px solid #f4f4f4;"></div>
<div class="a" style="left:264.1px;top:142.3px;width:194px;height:22.5px;background:linear-gradient(#8e8e8e 0%,#7c7c7c 30%,#555 60%,#1a1a1a 88%,#000 100%);"></div>
<div class="t" style="left:339.00px;top:147.37px;font-size:11.5px;line-height:11.5px;color:#e6e6e6;letter-spacing:-0.788px;font-stretch:condensed;">Drive Mode</div>
<div class="a" style="left:287.7px;top:174.2px;width:30.6px;height:30.6px;background:#c9c9c9;border:1.5px solid;border-color:#f4f4f4 #8a8a8a #8a8a8a #f4f4f4;"></div>
<div class="a" style="left:345.3px;top:174.2px;width:30.7px;height:30.6px;background:#c9c9c9;border:1.5px solid;border-color:#f4f4f4 #8a8a8a #8a8a8a #f4f4f4;"></div>
<div class="a" style="left:402.6px;top:174.2px;width:30.6px;height:30.6px;background:#f6ad7c;border:1.5px solid;border-color:#f4f4f4 #8a8a8a #8a8a8a #f4f4f4;"></div>
<svg style="left:288px;top:175px" width="32" height="35"><g transform="translate(5.3 3.3) scale(0.72 0.62)"><path d="M14.5 22C12 17 14 11 19 7C22 4.5 25 3 26.7 0.4C29.5 6 30 12 27.5 17C25 21 19 23.5 14.5 22Z" fill="#3d9140"/><path d="M10.8 25.5C8 26.5 4 25 1.7 16.8C5 16.5 8.5 17.5 10 20.5C10.8 22 11 24 10.8 25.5Z" fill="#3d9140"/><path d="M15.5 21Q13 25 12.6 33.5" stroke="#3d9140" stroke-width="2" fill="none"/><path d="M11 25.5Q12.5 26 13.5 27" stroke="#3d9140" stroke-width="1.5" fill="none"/><path d="M15.5 21.5L25.5 7M21 13L19.5 10.5M23.5 10L22.5 7.5M19 16L22.5 16.5M22 12L25.5 12.5" stroke="#e8f4e8" stroke-width="0.9" fill="none"/></g></svg>
<svg style="left:342px;top:175px" width="36" height="28"><g transform="translate(-0.2 2.1) scale(1.04 0.83)"><path d="M10 6Q10.5 5.5 12 5.5H23.5Q25 5.5 25.5 6.5L27.5 11H28.5V12.5H28.3Q28.8 14 28.6 16V22.4H23.3V21.2H12V22.4H7.1V16Q7 14 7.4 12.5H7V11H8.2Z" fill="#000"/><path d="M11.2 11.6L12.5 7.8H23.3L24.5 11.6Z" fill="#c9c9c9"/><path d="M8 17Q10 16.5 12.2 18.8Q9.5 19.8 8.2 19Z" fill="#c9c9c9"/><path d="M27.7 17Q25.7 16.5 23.5 18.8Q26.2 19.8 27.5 19Z" fill="#c9c9c9"/></g></svg>
<div class="t" style="left:412.30px;top:181.68px;font-size:16.5px;line-height:16.5px;font-weight:700;font-style:italic;font-family:'Liberation Serif',serif;color:#0a0a0a;transform:scaleX(1.3);transform-origin:0 0;-webkit-text-stroke:0.5px #0a0a0a;">S</div>
<div class="t" style="left:396.50px;top:213.03px;font-size:14.5px;line-height:14.5px;font-weight:700;color:#f5c010;letter-spacing:-2.013px;font-stretch:condensed;">SPORTS</div>
<div class="a" style="left:205px;top:261.5px;width:331.1px;height:69.5px;background:#e7e7e7;"></div>
<div class="a" style="left:243.9px;top:264px;width:232.1px;height:61.9px;background:#f0f0f0;"></div>
<div class="a" style="left:262px;top:272.8px;width:62px;height:48.4px;background:#e1e1e1;border:1px solid #b3b3b3;"></div>
<div class="a" style="left:338.7px;top:272.8px;width:62px;height:48.4px;background:#e1e1e1;border:1px solid #b3b3b3;"></div>
<div class="a" style="left:415px;top:272.8px;width:57.3px;height:48.4px;background:#ebebeb;border:2px solid #3c8fe0;"></div>
<div class="a" style="left:417.5px;top:275.3px;width:52.3px;height:43.4px;background:transparent;border:1px dashed #6a9fd8;"></div>
<svg style="left:277px;top:281px" width="32" height="35"><path d="M14.5 22C12 17 14 11 19 7C22 4.5 25 3 26.7 0.4C29.5 6 30 12 27.5 17C25 21 19 23.5 14.5 22Z" fill="#3d9140"/><path d="M10.8 25.5C8 26.5 4 25 1.7 16.8C5 16.5 8.5 17.5 10 20.5C10.8 22 11 24 10.8 25.5Z" fill="#3d9140"/><path d="M15.5 21Q13 25 12.6 33.5" stroke="#3d9140" stroke-width="2" fill="none"/><path d="M11 25.5Q12.5 26 13.5 27" stroke="#3d9140" stroke-width="1.5" fill="none"/><path d="M15.5 21.5L25.5 7M21 13L19.5 10.5M23.5 10L22.5 7.5M19 16L22.5 16.5M22 12L25.5 12.5" stroke="#e8f4e8" stroke-width="0.9" fill="none"/></svg>
<svg style="left:352px;top:282px" width="36" height="28"><path d="M10 6Q10.5 5.5 12 5.5H23.5Q25 5.5 25.5 6.5L27.5 11H28.5V12.5H28.3Q28.8 14 28.6 16V22.4H23.3V21.2H12V22.4H7.1V16Q7 14 7.4 12.5H7V11H8.2Z" fill="#000"/><path d="M11.2 11.6L12.5 7.8H23.3L24.5 11.6Z" fill="#e1e1e1"/><path d="M8 17Q10 16.5 12.2 18.8Q9.5 19.8 8.2 19Z" fill="#e1e1e1"/><path d="M27.7 17Q25.7 16.5 23.5 18.8Q26.2 19.8 27.5 19Z" fill="#e1e1e1"/></svg>
<div class="t" style="left:435.70px;top:286.71px;font-size:21px;line-height:21px;font-weight:700;font-style:italic;font-family:'Liberation Serif',serif;color:#0a0a0a;transform:scaleX(1.4);transform-origin:0 0;-webkit-text-stroke:0.7px #0a0a0a;">S</div>
<div class="a" style="left:204.2px;top:330.8px;width:327.5px;height:30.8px;background:#3d3d3d;"></div>
<div class="t" style="left:208.20px;top:344.29px;font-size:11px;line-height:11px;color:#f6f6f6;letter-spacing:0.195px;-webkit-text-stroke:0;">Battery Capacity:</div>
<div class="a" style="left:302px;top:339.6px;width:73.1px;height:18.2px;background:#ffffff;border:1px solid #1a1a1a;"></div>
<div class="t" style="left:304.90px;top:343.89px;font-size:11px;line-height:11px;color:#000;letter-spacing:0.072px;-webkit-text-stroke:0;">48000</div>
<div class="t" style="left:402.00px;top:340.99px;font-size:11px;line-height:11px;color:#f2f2f2;letter-spacing:0.108px;-webkit-text-stroke:0;">Power Usage:</div>
<div class="t" style="left:483.10px;top:340.99px;font-size:11px;line-height:11px;color:#f2f2f2;letter-spacing:0.560px;-webkit-text-stroke:0;">175</div>
<div class="a" style="left:531.7px;top:330.8px;width:4.4px;height:30.8px;background:#e7e7e7;"></div>
<div class="a" style="left:204.2px;top:361.6px;width:331.9px;height:10.5px;background:#e4e4e4;"></div>
<div class="a" style="left:204.2px;top:372px;width:331.9px;height:16.3px;background:linear-gradient(#ececec,#f2f2f2);"></div>
<svg style="left:206px;top:373px" width="13" height="13" viewBox="0 0 13 13"><rect x="1.5" y="1.5" width="10" height="11" fill="#f4f4f4" stroke="#666"/><path d="M0.5 0.5L4 0.5L4 4" fill="none" stroke="#2a66c8" stroke-width="1.4"/><path d="M3 5H10M3 7.5H10M3 10H10" stroke="#777" stroke-width="0.8"/></svg>
<svg style="left:224.5px;top:373.5px" width="12" height="11" viewBox="0 0 12 11"><path d="M1 0.5H8L5.5 4V6" fill="#fff" stroke="#666"/><rect x="0.5" y="5.5" width="9" height="5" fill="#e6e08a" stroke="#8a8a6a"/><path d="M9.5 1V4M8 2.5H11" stroke="#444"/></svg>
<svg style="left:240.5px;top:373.5px" width="14" height="12" viewBox="0 0 14 12"><path d="M2 0.5V4.5M0 2.5H4" stroke="#333" stroke-width="1.3"/><path d="M1 11.5L6 6.5L8 8.5L13 3.5" fill="none" stroke="#d01a2a" stroke-width="1.5" stroke-dasharray="2.5 1"/></svg>
<div class="a" style="left:204.2px;top:388.2px;width:327.5px;height:141.3px;background:#ffffff;"></div>
<div class="a" style="left:204.2px;top:529.5px;width:331.9px;height:15.5px;background:#e4e4e4;"></div>
<div class="a" style="left:531.7px;top:388.2px;width:4.4px;height:141.3px;background:#efefef;"></div>
<div class="t" style="left:358.40px;top:390.45px;font-size:14px;line-height:14px;font-weight:700;color:#000;letter-spacing:0.067px;">PU</div>
<svg style="left:200px;top:405px" width="340" height="130"><path d="M60.40 7.5V80" stroke="#d4d4d4" stroke-width="0.8" stroke-dasharray="1.5 1.5"/><path d="M79.80 7.5V80" stroke="#d4d4d4" stroke-width="0.8" stroke-dasharray="1.5 1.5"/><path d="M99.20 7.5V80" stroke="#d4d4d4" stroke-width="0.8" stroke-dasharray="1.5 1.5"/><path d="M118.60 7.5V80" stroke="#d4d4d4" stroke-width="0.8" stroke-dasharray="1.5 1.5"/><path d="M138.00 7.5V80" stroke="#d4d4d4" stroke-width="0.8" stroke-dasharray="1.5 1.5"/><path d="M157.40 7.5V80" stroke="#d4d4d4" stroke-width="0.8" stroke-dasharray="1.5 1.5"/><path d="M176.80 7.5V80" stroke="#d4d4d4" stroke-width="0.8" stroke-dasharray="1.5 1.5"/><path d="M196.20 7.5V80" stroke="#d4d4d4" stroke-width="0.8" stroke-dasharray="1.5 1.5"/><path d="M215.60 7.5V80" stroke="#d4d4d4" stroke-width="0.8" stroke-dasharray="1.5 1.5"/><path d="M235.00 7.5V80" stroke="#d4d4d4" stroke-width="0.8" stroke-dasharray="1.5 1.5"/><path d="M254.40 7.5V80" stroke="#d4d4d4" stroke-width="0.8" stroke-dasharray="1.5 1.5"/><path d="M273.80 7.5V80" stroke="#d4d4d4" stroke-width="0.8" stroke-dasharray="1.5 1.5"/><path d="M293.20 7.5V80" stroke="#d4d4d4" stroke-width="0.8" stroke-dasharray="1.5 1.5"/><path d="M41.5 60.40H324" stroke="#d4d4d4" stroke-width="0.8" stroke-dasharray="1.5 1.5"/><path d="M41.5 40.40H324" stroke="#d4d4d4" stroke-width="0.8" stroke-dasharray="1.5 1.5"/><path d="M41.5 20.40H324" stroke="#d4d4d4" stroke-width="0.8" stroke-dasharray="1.5 1.5"/><rect x="41.5" y="7.3" width="283" height="73.0" fill="none" stroke="#cfcfcf" stroke-width="0.8"/><path d="M38.2 7V85.5" stroke="#c4c4c4" stroke-width="0.7"/><path d="M35.5 80.40H38" stroke="#999" stroke-width="0.8"/><path d="M35.5 60.40H38" stroke="#999" stroke-width="0.8"/><path d="M35.5 40.40H38" stroke="#999" stroke-width="0.8"/><path d="M35.5 20.40H38" stroke="#999" stroke-width="0.8"/><path d="M41 83H324" stroke="#c4c4c4" stroke-width="0.8"/><path d="M41.00 81.5V84.5" stroke="#999" stroke-width="0.8"/><path d="M60.40 81.5V84.5" stroke="#999" stroke-width="0.8"/><path d="M79.80 81.5V84.5" stroke="#999" stroke-width="0.8"/><path d="M99.20 81.5V84.5" stroke="#999" stroke-width="0.8"/><path d="M118.60 81.5V84.5" stroke="#999" stroke-width="0.8"/><path d="M138.00 81.5V84.5" stroke="#999" stroke-width="0.8"/><path d="M157.40 81.5V84.5" stroke="#999" stroke-width="0.8"/><path d="M176.80 81.5V84.5" stroke="#999" stroke-width="0.8"/><path d="M196.20 81.5V84.5" stroke="#999" stroke-width="0.8"/><path d="M215.60 81.5V84.5" stroke="#999" stroke-width="0.8"/><path d="M235.00 81.5V84.5" stroke="#999" stroke-width="0.8"/><path d="M254.40 81.5V84.5" stroke="#999" stroke-width="0.8"/><path d="M273.80 81.5V84.5" stroke="#999" stroke-width="0.8"/><path d="M293.20 81.5V84.5" stroke="#999" stroke-width="0.8"/><path d="M312.60 81.5V84.5" stroke="#999" stroke-width="0.8"/><path d="M41.00 16.40 L165.16 16.40 L169.82 21.60 L285.44 21.60 L290.48 10.40 L308.72 10.40" fill="none" stroke="#c41a3c" stroke-width="1.9" stroke-linejoin="round"/><path d="M157.4 117.3H165.8" stroke="#c41a3c" stroke-width="2"/></svg>
<div class="t" style="left:230.00px;top:482.25px;font-size:7.5px;line-height:7.5px;color:#333;-webkit-text-stroke:0;">0</div>
<div class="t" style="left:225.60px;top:462.25px;font-size:7.5px;line-height:7.5px;color:#333;letter-spacing:0.656px;-webkit-text-stroke:0;">50</div>
<div class="t" style="left:222.40px;top:442.25px;font-size:7.5px;line-height:7.5px;color:#333;letter-spacing:-0.158px;-webkit-text-stroke:0;">100</div>
<div class="t" style="left:222.40px;top:422.25px;font-size:7.5px;line-height:7.5px;color:#333;letter-spacing:-0.158px;-webkit-text-stroke:0;">150</div>
<div class="t" style="left:238.60px;top:492.75px;font-size:7.5px;line-height:7.5px;color:#333;-webkit-text-stroke:0;">0</div>
<div class="t" style="left:258.00px;top:492.75px;font-size:7.5px;line-height:7.5px;color:#333;-webkit-text-stroke:0;">5</div>
<div class="t" style="left:275.35px;top:492.75px;font-size:7.5px;line-height:7.5px;color:#333;-webkit-text-stroke:0;">10</div>
<div class="t" style="left:294.75px;top:492.75px;font-size:7.5px;line-height:7.5px;color:#333;-webkit-text-stroke:0;">15</div>
<div class="t" style="left:314.15px;top:492.75px;font-size:7.5px;line-height:7.5px;color:#333;-webkit-text-stroke:0;">20</div>
<div class="t" style="left:333.55px;top:492.75px;font-size:7.5px;line-height:7.5px;color:#333;-webkit-text-stroke:0;">25</div>
<div class="t" style="left:352.95px;top:492.75px;font-size:7.5px;line-height:7.5px;color:#333;-webkit-text-stroke:0;">30</div>
<div class="t" style="left:372.35px;top:492.75px;font-size:7.5px;line-height:7.5px;color:#333;-webkit-text-stroke:0;">35</div>
<div class="t" style="left:391.75px;top:492.75px;font-size:7.5px;line-height:7.5px;color:#333;-webkit-text-stroke:0;">40</div>
<div class="t" style="left:411.15px;top:492.75px;font-size:7.5px;line-height:7.5px;color:#333;-webkit-text-stroke:0;">45</div>
<div class="t" style="left:430.55px;top:492.75px;font-size:7.5px;line-height:7.5px;color:#333;-webkit-text-stroke:0;">50</div>
<div class="t" style="left:449.95px;top:492.75px;font-size:7.5px;line-height:7.5px;color:#333;-webkit-text-stroke:0;">55</div>
<div class="t" style="left:469.35px;top:492.75px;font-size:7.5px;line-height:7.5px;color:#333;-webkit-text-stroke:0;">60</div>
<div class="t" style="left:488.75px;top:492.75px;font-size:7.5px;line-height:7.5px;color:#333;-webkit-text-stroke:0;">65</div>
<div class="t" style="left:508.15px;top:492.75px;font-size:7.5px;line-height:7.5px;color:#333;-webkit-text-stroke:0;">70</div>
<div class="t" style="left:364.70px;top:502.75px;font-size:7.5px;line-height:7.5px;font-weight:700;color:#222;letter-spacing:0.194px;">time(min)</div>
<div class="t" style="left:369.00px;top:518.55px;font-size:7.5px;line-height:7.5px;font-weight:700;color:#222;letter-spacing:-0.922px;">PU</div>
<div class="t" style="left:211.5px;font-size:8px;line-height:8px;font-weight:700;color:#111;transform:rotate(-90deg);transform-origin:0 0;top:454px;">PU</div>
<svg style="left:494px;top:367px" width="9" height="13" viewBox="0 0 9 13"><path d="M0.5 0.5V11L3 8.6L5 12.3L6.6 11.6L4.7 8H8Z" fill="#fff" stroke="#222" stroke-width="0.9"/></svg>
</body></html>
